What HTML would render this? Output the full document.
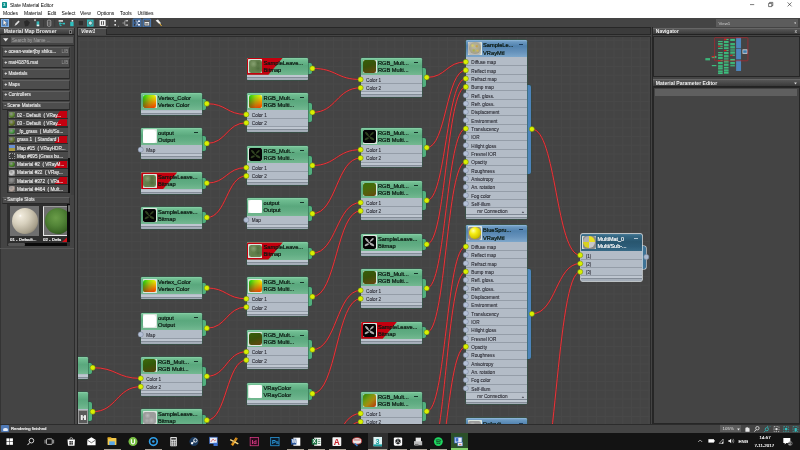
<!DOCTYPE html><html><head><meta charset="utf-8"><title>Slate Material Editor</title><style>
*{box-sizing:border-box;margin:0;padding:0}
html,body{width:800px;height:450px;overflow:hidden;background:#444;font-family:"Liberation Sans",sans-serif;}
#r{position:relative;width:800px;height:450px;overflow:hidden;background:#444;will-change:transform}
.a{position:absolute}
.t{position:absolute;white-space:pre;line-height:1;font-size:5.2px;color:#111}
.w{color:#e6e6e6}
.nd{position:absolute;width:61.5px;border-radius:1.5px;background:#b3bcc7;box-shadow:0 0 0 .5px #2f5a48}
.hd{position:absolute;left:0;top:0;width:100%;height:16.5px;border-radius:1.5px 1.5px 0 0;background:linear-gradient(#8ad2a8 0,#70be92 10%,#5aa87d 45%,#62ad84 70%,#74b991 100%);overflow:hidden}
.hdb{background:linear-gradient(#94bbdc 0,#6c9ac2 10%,#5182ae 35%,#6692bb 70%,#7da7cb 100%)}
.hdm{background:linear-gradient(#4a7c98 0,#356884 12%,#28566f 45%,#2c5c78 75%,#376a86 100%)}
.th{position:absolute;left:1.6px;top:1.7px;width:13.9px;height:13.7px;border-radius:.6px;background:#dce6df}.ti{position:absolute;left:.55px;top:.55px;right:.55px;bottom:.55px;border-radius:2.3px;overflow:hidden}
.nt{position:absolute;left:16.8px;white-space:nowrap;line-height:1;font-size:5.7px;color:#0c1a12;-webkit-text-stroke:.24px #0c1a12}
.row{position:absolute;left:0;width:100%;height:8.34px;border-bottom:.55px solid #949da8}
.rl{position:absolute;left:5px;top:1.6px;white-space:nowrap;line-height:1;font-size:4.65px;color:#26262e;-webkit-text-stroke:.08px #26262e}
.ft{position:absolute;left:0;bottom:0;width:100%;height:5px;background:linear-gradient(#bec6d0 0,#bec6d0 2.1px,#848d98 2.1px,#848d98 2.8px,#a8b1bc 2.8px,#a2abb6 100%);border-radius:0 0 1.5px 1.5px}
.nub{position:absolute;width:4.6px;border-radius:0 2px 2px 0;background:#4aa07a}
.mn{position:absolute;right:3.8px;top:4.3px;width:4.2px;height:.65px;background:#16352a}
.tri{position:absolute;left:0;top:0;width:36px;height:17.05px;background:#c4000f;clip-path:polygon(0 0,100% 0,60% 100%,0 100%)}
.li{position:absolute;left:1.7px;width:68.8px;height:10px;background:#4d4d4d;border-top:.5px solid #606060;border-bottom:.8px solid #282828;border-left:.4px solid #3a3a3a;border-right:.5px solid #303030}
.sm{position:absolute;left:7.5px;width:60px;height:8.2px;border-bottom:.6px solid #2a2a2a;overflow:hidden;background:#4a4a4a}
.hdr{background:linear-gradient(#565656,#3a3a3a);border-top:.5px solid #666;border-bottom:.6px solid #222}
</style></head><body><div id="r">
<div class="a" style="left:0px;top:0px;width:800px;height:17.9px;background:#fff;"></div>
<div class="a" style="left:1.5px;top:1.5px;width:5px;height:6px;background:#0f8f8a;border-radius:.8px"></div>
<div class="t" style="left:3px;top:3.10px;font-size:4.4px;color:#d8ffff;font-weight:bold;">3</div>
<div class="t" style="left:10px;top:3.64px;font-size:4.82px;color:#000;">Slate Material Editor</div>
<div class="t" style="left:3px;top:11.20px;font-size:5.0px;color:#000;">Modes</div>
<div class="t" style="left:24px;top:11.20px;font-size:5.0px;color:#000;">Material</div>
<div class="t" style="left:47.6px;top:11.20px;font-size:5.0px;color:#000;">Edit</div>
<div class="t" style="left:61.6px;top:11.20px;font-size:5.0px;color:#000;">Select</div>
<div class="t" style="left:80px;top:11.20px;font-size:5.0px;color:#000;">View</div>
<div class="t" style="left:97px;top:11.20px;font-size:5.0px;color:#000;">Options</div>
<div class="t" style="left:120px;top:11.20px;font-size:5.0px;color:#000;">Tools</div>
<div class="t" style="left:137.5px;top:11.20px;font-size:5.0px;color:#000;">Utilities</div>
<svg class="a" style="left:740px;top:0;width:60px;height:10px" viewBox="0 0 60 10"><g stroke="#222" stroke-width=".6" fill="none"><path d="M10 4.6h4.2"/><path d="M28.6 3.4h3.2v3.2h-3.2z"/><path d="M29.6 3.4v-1h3.2v3.2h-1"/><path d="M47.6 2.4l4 4M51.6 2.4l-4 4"/></g></svg>
<div class="a" style="left:0px;top:17.9px;width:800px;height:9.7px;background:#444;"></div>
<div class="a" style="left:0.5px;top:18.6px;width:8.6px;height:8.6px;background:#4f86c6;border:.5px solid #7fb0e6"></div>
<svg class="a" style="left:0;top:18px;width:170px;height:10px" viewBox="0 0 170 10"><path d="M3.2 1.6v5.6l1.4-1.2 1 2 .9-.4-1-2h1.8z" fill="#f4f4f4" stroke="#222" stroke-width=".3"/><rect x="10.8" y="1.4" width=".5" height="7.4" fill="#333"/><path d="M14.5 8l1-2.4 3-3 1.2 1.2-3 3z" fill="#ddd"/><path d="M24 3.5l3-1.5 3 2.5-2 3.5-3 .5z" fill="#2a2a2a"/><path d="M34 2.2h2M35 1.2v2" stroke="#eee" stroke-width=".6"/><rect x="36.6" y="3.4" width="2.6" height="4.8" fill="#35b8b8"/><rect x="36.8" y="6.6" width="2.4" height="1.6" fill="#eee"/><rect x="43.4" y="1.4" width=".5" height="7.4" fill="#333"/><rect x="47.4" y="2.2" width="3.4" height="6" rx="1" fill="none" stroke="#bbb" stroke-width=".7"/><path d="M49.1 3.4v3.6" stroke="#bbb" stroke-width=".5"/><rect x="54.6" y="1.4" width=".5" height="7.4" fill="#333"/><rect x="58.6" y="2.2" width="4.4" height="1.4" fill="#eee"/><path d="M59 5.6h3.4M60 4v3.6l1.6 0" stroke="#30c0c0" stroke-width=".9" fill="none"/><rect x="62.6" y="4.8" width="2.4" height="1.6" fill="#30c0c0"/><rect x="70.2" y="3.8" width="3.4" height="4.4" fill="#30c0c0"/><rect x="71.6" y="2" width="1.6" height="1.6" fill="#eee"/><rect x="78.2" y="2.4" width="5.4" height="5.4" fill="#2c2c2c" stroke="#555" stroke-width=".5"/><rect x="87" y="1.6" width="6.6" height="7" fill="#30b8b8"/><circle cx="90.3" cy="5.1" r="2" fill="#bfe8e8" stroke="#333" stroke-width=".5"/><rect x="95.6" y="1.4" width=".5" height="7.4" fill="#333"/><rect x="99.6" y="2" width="6" height="6" rx=".6" fill="#f2f2f2"/><rect x="101.2" y="3.2" width="2.8" height="3.6" fill="#333"/><rect x="102" y="3.2" width="1.2" height="3.6" fill="#eee"/><path d="M106.2 8.8l1.2-1.2v1.2z" fill="#ddd"/><rect x="109.6" y="1.4" width=".5" height="7.4" fill="#333"/><rect x="114.4" y="2" width="1.6" height="1.6" fill="#e8e8e8"/><rect x="114.4" y="6" width="1.6" height="1.6" fill="#e8e8e8"/><path d="M118 8.6l1-1v1z" fill="#ddd"/><path d="M122.4 5h2.4M124.8 2.8v4.4M124.8 2.8h2M124.8 7.2h2" stroke="#ccc" stroke-width=".6" fill="none"/><rect x="126.4" y="2" width="1.4" height="1.4" fill="#ddd"/><rect x="126.4" y="6.4" width="1.4" height="1.4" fill="#ddd"/><rect x="130.2" y="1.4" width=".5" height="7.4" fill="#333"/><rect x="133" y="1" width="8" height="8.2" rx=".6" fill="#35557f" stroke="#5a93d6" stroke-width=".7"/><rect x="143" y="1" width="7.6" height="8.2" rx=".6" fill="#35557f" stroke="#5a93d6" stroke-width=".7"/><path d="M134.4 3h2.2M134.4 7h2.2M137 3v4M137 5h1.6" stroke="#e8f0ff" stroke-width=".6" fill="none"/><rect x="138" y="2.4" width="2" height="1.6" fill="#e8f0ff"/><rect x="138" y="6" width="2" height="1.6" fill="#e8f0ff"/><rect x="134" y="2.2" width="1.4" height="1.4" fill="#222"/><rect x="134" y="6.2" width="1.4" height="1.4" fill="#222"/><rect x="144.2" y="2.6" width="5.2" height="5.2" fill="#e8e8e8" stroke="#333" stroke-width=".4"/><rect x="144.2" y="2.6" width="5.2" height="1.4" fill="#555"/><rect x="145.2" y="5" width="3.2" height="1.8" fill="#888"/><rect x="151.8" y="1.4" width=".5" height="7.4" fill="#333"/><path d="M155.6 2.6l2.4-1 3 3.6-1.4 1z" fill="#f0f0f0"/><path d="M159.6 5.4l2 2.6" stroke="#e8b030" stroke-width="1"/></svg>
<div class="a" style="left:0px;top:27.6px;width:73.6px;height:396px;background:#444;"></div>
<div class="a" style="left:0px;top:27.6px;width:0.9px;height:396px;background:#343434;"></div>
<div class="a" style="left:70.8px;top:45px;width:2.8px;height:150px;background:#3e3e3e;"></div>
<div class="a" style="left:73.6px;top:27.6px;width:1.6px;height:396px;background:#2c2c2c;"></div>
<div class="a" style="left:75.2px;top:27.6px;width:1.4px;height:396px;background:#4c4c4c;"></div>
<div class="a" style="left:76.6px;top:27.6px;width:1.0px;height:396px;background:#262626;"></div>
<div class="a hdr" style="left:0;top:27.8px;width:73.6px;height:7.6px"></div>
<div class="t" style="left:3.8px;top:29.13px;font-size:5.1px;color:#ececec;font-weight:bold;">Material Map Browser</div>
<div class="a" style="left:68.6px;top:29.6px;width:3px;height:4px;background:#1c1c1c;border:.5px solid #777"></div>
<svg class="a" style="left:2px;top:37px;width:8px;height:6px" viewBox="0 0 8 6"><path d="M1 1.2h5.4l-2.7 3.4z" fill="#e8e8e8"/></svg>
<div class="a" style="left:11px;top:36.6px;width:62px;height:6.6px;background:#5e5e5e;"></div>
<div class="t" style="left:12px;top:38.53px;font-size:4.5px;color:#a8a8a8;">Search by Name ...</div>
<div class="a" style="left:0px;top:44.6px;width:73.6px;height:0.6px;background:#2a2a2a;"></div>
<div class="li" style="top:46.9px;height:10px"></div>
<div class="t" style="left:4.4px;top:50.08px;font-size:4.65px;color:#e4e4e4;-webkit-text-stroke:.15px #e4e4e4">+ ocean-water[by shiku...</div>
<div class="t" style="left:61.6px;top:50.03px;font-size:4.5px;color:#9a9a9a;">LIB</div>
<div class="li" style="top:58px;height:10px"></div>
<div class="t" style="left:4.4px;top:60.88px;font-size:4.65px;color:#e4e4e4;-webkit-text-stroke:.15px #e4e4e4">+ mat41876.mat</div>
<div class="t" style="left:61.6px;top:60.83px;font-size:4.5px;color:#9a9a9a;">LIB</div>
<div class="li" style="top:69px;height:10px"></div>
<div class="t" style="left:4.4px;top:71.78px;font-size:4.65px;color:#e4e4e4;-webkit-text-stroke:.15px #e4e4e4">+ Materials</div>
<div class="li" style="top:80px;height:10px"></div>
<div class="t" style="left:4.4px;top:82.68px;font-size:4.65px;color:#e4e4e4;-webkit-text-stroke:.15px #e4e4e4">+ Maps</div>
<div class="li" style="top:91px;height:10px"></div>
<div class="t" style="left:4.4px;top:93.48px;font-size:4.65px;color:#e4e4e4;-webkit-text-stroke:.15px #e4e4e4">+ Controllers</div>
<div class="li" style="top:101.6px;height:8px"></div>
<div class="t" style="left:4.4px;top:103.78px;font-size:4.65px;color:#e4e4e4;-webkit-text-stroke:.15px #e4e4e4">- Scene Materials</div>
<div class="a" style="left:7px;top:109.8px;width:63.4px;height:83.2px;background:#2a2a2a;"></div>
<div class="sm" style="top:111.0px">
<div class="a" style="right:.4px;top:0;width:13.4px;height:8.2px;background:#c4000f;clip-path:polygon(47% 0,100% 0,100% 100%,0 100%)"></div>
<div class="a" style="left:1.2px;top:.8px;width:6.4px;height:6.4px;background:#777"></div><div class="a" style="left:1.6px;top:1.2px;width:5.6px;height:5.6px;border-radius:50%;background:radial-gradient(circle at 38% 32%,#fff3 0,#5f8a34 45%,#1a1a1a 110%)"></div>
<div class="t" style="left:9.4px;top:2.58px;font-size:4.65px;color:#e8e8e8;-webkit-text-stroke:.14px #e8e8e8">02 - Default  ( VRay...</div></div>
<div class="sm" style="top:119.25px">
<div class="a" style="right:.4px;top:0;width:13.4px;height:8.2px;background:#c4000f;clip-path:polygon(47% 0,100% 0,100% 100%,0 100%)"></div>
<div class="a" style="left:1.2px;top:.8px;width:6.4px;height:6.4px;background:#777"></div><div class="a" style="left:1.6px;top:1.2px;width:5.6px;height:5.6px;border-radius:50%;background:radial-gradient(circle at 38% 32%,#fff3 0,#66782a 45%,#1a1a1a 110%)"></div>
<div class="t" style="left:9.4px;top:2.58px;font-size:4.65px;color:#e8e8e8;-webkit-text-stroke:.14px #e8e8e8">03 - Default  ( VRay...</div></div>
<div class="sm" style="top:127.5px">
<div class="a" style="left:1.2px;top:.8px;width:6.4px;height:6.4px;background:#777"></div><div class="a" style="left:1.6px;top:1.2px;width:5.6px;height:5.6px;border-radius:50%;background:radial-gradient(circle at 38% 32%,#fff3 0,#4a9a44 45%,#1a1a1a 110%)"></div>
<div class="t" style="left:9.4px;top:2.58px;font-size:4.65px;color:#e8e8e8;-webkit-text-stroke:.14px #e8e8e8">_fp_grass  ( Multi/Su...</div></div>
<div class="sm" style="top:135.75px">
<div class="a" style="right:.4px;top:0;width:13.4px;height:8.2px;background:#c4000f;clip-path:polygon(47% 0,100% 0,100% 100%,0 100%)"></div>
<div class="a" style="left:1.2px;top:.8px;width:6.4px;height:6.4px;background:#777"></div><div class="a" style="left:1.6px;top:1.2px;width:5.6px;height:5.6px;border-radius:50%;background:radial-gradient(circle at 38% 32%,#fff3 0,#62782e 45%,#1a1a1a 110%)"></div>
<div class="t" style="left:9.4px;top:2.58px;font-size:4.65px;color:#e8e8e8;-webkit-text-stroke:.14px #e8e8e8">grass 1  ( Standard )</div></div>
<div class="sm" style="top:144.0px">
<div class="a" style="left:1.4px;top:1px;width:6px;height:6px;background:linear-gradient(#6a8fd0 50%,#a89a40 50%)"></div>
<div class="t" style="left:9.4px;top:2.58px;font-size:4.65px;color:#e8e8e8;-webkit-text-stroke:.14px #e8e8e8">Map #15  ( VRayHDR...</div></div>
<div class="sm" style="top:152.25px">
<div class="a" style="left:1.4px;top:1px;width:6px;height:6px;background:#3c3c3c;border:.5px dotted #999"></div>
<div class="t" style="left:9.4px;top:2.58px;font-size:4.65px;color:#e8e8e8;-webkit-text-stroke:.14px #e8e8e8">Map #695 (Grass bu...</div></div>
<div class="sm" style="top:160.5px">
<div class="a" style="right:.4px;top:0;width:13.4px;height:8.2px;background:#c4000f;clip-path:polygon(47% 0,100% 0,100% 100%,0 100%)"></div>
<div class="a" style="left:1.2px;top:.8px;width:6.4px;height:6.4px;background:#777"></div><div class="a" style="left:1.6px;top:1.2px;width:5.6px;height:5.6px;border-radius:50%;background:radial-gradient(circle at 38% 32%,#fff3 0,#4c8a2a 45%,#1a1a1a 110%)"></div>
<div class="t" style="left:9.4px;top:2.58px;font-size:4.65px;color:#e8e8e8;-webkit-text-stroke:.14px #e8e8e8">Material #2  ( VRayM...</div></div>
<div class="sm" style="top:168.75px">
<div class="a" style="left:1.2px;top:.8px;width:6.4px;height:6.4px;background:#777"></div><div class="a" style="left:1.6px;top:1.2px;width:5.6px;height:5.6px;border-radius:50%;background:radial-gradient(circle at 38% 32%,#fff3 0,#cfcfcf 45%,#1a1a1a 110%)"></div>
<div class="t" style="left:9.4px;top:2.58px;font-size:4.65px;color:#e8e8e8;-webkit-text-stroke:.14px #e8e8e8">Material #22  ( VRay...</div></div>
<div class="sm" style="top:177.0px">
<div class="a" style="right:.4px;top:0;width:13.4px;height:8.2px;background:#c4000f;clip-path:polygon(47% 0,100% 0,100% 100%,0 100%)"></div>
<div class="a" style="left:1.2px;top:.8px;width:6.4px;height:6.4px;background:#777"></div><div class="a" style="left:1.6px;top:1.2px;width:5.6px;height:5.6px;border-radius:50%;background:radial-gradient(circle at 38% 32%,#fff3 0,#7a7a7a 45%,#1a1a1a 110%)"></div>
<div class="t" style="left:9.4px;top:2.58px;font-size:4.65px;color:#e8e8e8;-webkit-text-stroke:.14px #e8e8e8">Material #372  ( VRa...</div></div>
<div class="sm" style="top:185.25px">
<div class="a" style="left:1.2px;top:.8px;width:6.4px;height:6.4px;background:#777"></div><div class="a" style="left:1.6px;top:1.2px;width:5.6px;height:5.6px;border-radius:50%;background:radial-gradient(circle at 38% 32%,#fff3 0,#b8a8a0 45%,#1a1a1a 110%)"></div>
<div class="t" style="left:9.4px;top:2.58px;font-size:4.65px;color:#e8e8e8;-webkit-text-stroke:.14px #e8e8e8">Material #464  ( Mult...</div></div>
<div class="a" style="left:67.5px;top:109.8px;width:2.9px;height:83.2px;background:#555;"></div>
<div class="a" style="left:67.5px;top:158px;width:2.9px;height:35px;background:#0c0c0c;"></div>
<div class="li" style="top:196.6px;height:7px"></div>
<div class="t" style="left:4.4px;top:198.28px;font-size:4.65px;color:#e4e4e4;-webkit-text-stroke:.15px #e4e4e4">- Sample Slots</div>
<div class="a" style="left:7px;top:204.4px;width:63.4px;height:42px;background:#2e2e2e;"></div>
<div class="a" style="left:10px;top:206px;width:29.4px;height:30px;background:#6f6f6f;"></div>
<div class="a" style="left:11.6px;top:207.6px;width:26px;height:26px;border-radius:50%;background:radial-gradient(circle at 32% 30%,#fff 0,#efe9da 6%,#d6cfbc 35%,#a8a08c 70%,#5e584c 100%)"></div>
<div class="a" style="left:43px;top:206px;width:24.4px;height:30px;background:#6f6f6f;border-left:.7px solid #e8e8e8;border-bottom:.7px solid #e8e8e8;border-top:.4px solid #9a9a9a"></div>
<div class="a" style="left:44.6px;top:207.6px;width:22.8px;height:26px;overflow:hidden"><div class="a" style="left:0;top:0;width:26px;height:26px;border-radius:50%;background:radial-gradient(circle at 42% 38%,#6a9c48 0,#538538 35%,#3c6826 65%,#274a18 88%,#16300c 100%)"></div></div>
<div class="t" style="left:10px;top:238.00px;font-size:4.4px;color:#ececec;-webkit-text-stroke:.22px #ececec">01 - Default...</div>
<div class="t" style="left:43px;top:238.00px;font-size:4.4px;color:#ececec;-webkit-text-stroke:.22px #ececec">02 - Defa</div>
<div class="a" style="left:62px;top:237px;width:5.4px;height:5px;background:#d01018;clip-path:polygon(100% 0,100% 100%,0 100%)"></div>
<div class="a" style="left:67.4px;top:204.4px;width:3px;height:38px;background:#0a0a0a;"></div>
<div class="a" style="left:67.6px;top:204.6px;width:2.6px;height:7px;background:#6a6a6a;border-radius:1px"></div>
<div class="a" style="left:8px;top:242.6px;width:59.4px;height:3.4px;background:#0a0a0a;"></div>
<div class="a" style="left:8.4px;top:242.8px;width:17px;height:3px;background:#555;border-radius:1px"></div>
<div class="a" style="left:0px;top:247.6px;width:73.6px;height:0.7px;background:#2a2a2a;"></div>
<div class="a" style="left:0px;top:248.3px;width:73.6px;height:0.5px;background:#555;"></div>
<div class="a" style="left:77.2px;top:27.3px;width:573.8px;height:8.2px;background:#3b3b3b;border:.8px solid #272727"></div>
<div class="a" style="left:77.8px;top:28px;width:28.8px;height:7px;background:#4a4a4a;border-top:.5px solid #6e6e6e;border-left:.5px solid #5e5e5e;border-right:.6px solid #2a2a2a"></div>
<div class="t" style="left:81px;top:29.33px;font-size:5.1px;color:#f0f0f0;font-weight:bold;font-style:italic">View1</div>
<div class="a" style="left:77.2px;top:35.5px;width:573.8px;height:1.4px;background:#2c2c2c;"></div>
<div class="a" style="left:76.8px;top:36.8px;width:574.2px;height:387.2px;background:#2a2a2a;"></div>
<div class="a" id="cv" style="left:77.6px;top:37.4px;width:572.8px;height:386.2px;overflow:hidden;background-color:#444;background-image:linear-gradient(90deg,#484848 .8px,transparent .8px),linear-gradient(#484848 .8px,transparent .8px);background-size:8.78px 8.76px;background-position:.8px 2.85px">
<div class="nub" style="left:10.10px;top:325.12px;height:11.05px;background:#52b07e;box-shadow:0 0 0 .4px #2a4a40"></div>
<div class="nd" style="left:-50.50px;top:319.60px;width:60.9px;height:22.10px">
<div class="hd" style="height:17.05px">
</div>
<div class="th"><div class="ti" style="background:radial-gradient(circle at 35% 30%,#86a070 0,transparent 30%),radial-gradient(circle at 70% 65%,#4e6c3c 0,transparent 35%),radial-gradient(circle at 30% 75%,#5e7e48 0,transparent 30%),radial-gradient(circle at 70% 25%,#52703e 0,transparent 28%),#68845200;background-color:#688452">
</div></div>
<div class="nt" style="top:2.94px;color:#0c1a12;-webkit-text-stroke-color:#0c1a12;font-size:5.7px"></div><div class="nt" style="top:9.94px;color:#0c1a12;-webkit-text-stroke-color:#0c1a12;font-size:5.7px"></div>
<div class="ft" style="height:4.4px"></div>
</div>
<div class="nub" style="left:10.10px;top:364.58px;height:19.36px;background:#52b07e;box-shadow:0 0 0 .4px #2a4a40"></div>
<div class="nd" style="left:-50.50px;top:354.90px;width:60.9px;height:38.73px">
<div class="hd" style="height:17.05px">
</div>
<div class="th"><div class="ti" style="background:radial-gradient(circle at 35% 30%,#86a070 0,transparent 30%),radial-gradient(circle at 70% 65%,#4e6c3c 0,transparent 35%),radial-gradient(circle at 30% 75%,#5e7e48 0,transparent 30%),radial-gradient(circle at 70% 25%,#52703e 0,transparent 28%),#68845200;background-color:#688452">
</div></div>
<div class="nt" style="top:2.94px;color:#0c1a12;-webkit-text-stroke-color:#0c1a12;font-size:5.7px"></div><div class="nt" style="top:9.94px;color:#0c1a12;-webkit-text-stroke-color:#0c1a12;font-size:5.7px"></div>
<div class="row" style="top:17.70px"><div class="rl" style="top:3.25px">Color 1</div></div>
<div class="row" style="top:26.04px"><div class="rl" style="top:3.25px">Color 2</div></div>
<div class="ft" style="height:4.35px"></div>
</div>
<div class="nub" style="left:124.20px;top:61.12px;height:11.05px;background:#52b07e;box-shadow:0 0 0 .4px #2a4a40"></div>
<div class="nd" style="left:63.60px;top:55.60px;width:60.9px;height:22.10px">
<div class="hd" style="height:17.05px">
</div>
<div class="th"><div class="ti" style="background:linear-gradient(90deg,#16cc10 0,#8ee010 45%,#f4f000 100%)">
<div class="a" style="left:0;top:0;width:100%;height:100%;background:linear-gradient(90deg,#8a5a0c 0,#d05808 50%,#f63c00 100%);-webkit-mask-image:linear-gradient(180deg,transparent 8%,#000 96%);mask-image:linear-gradient(180deg,transparent 8%,#000 96%)"></div>
</div></div>
<div class="nt" style="top:2.94px;color:#0c1a12;-webkit-text-stroke-color:#0c1a12;font-size:5.7px">Vertex_Color</div><div class="nt" style="top:9.94px;color:#0c1a12;-webkit-text-stroke-color:#0c1a12;font-size:5.7px">Vertex Color</div>
<div class="ft" style="height:4.4px"></div>
</div>
<div class="nub" style="left:124.20px;top:98.20px;height:15.60px;background:#52b07e;box-shadow:0 0 0 .4px #2a4a40"></div>
<div class="nd" style="left:63.60px;top:90.40px;width:60.9px;height:31.19px">
<div class="hd" style="height:17.45px">
</div>
<div class="th"><div class="ti" style="background:#fff">
</div></div>
<div class="nt" style="top:2.94px;color:#0c1a12;-webkit-text-stroke-color:#0c1a12;font-size:5.7px">output</div><div class="nt" style="top:9.94px;color:#0c1a12;-webkit-text-stroke-color:#0c1a12;font-size:5.7px">Output</div>
<div class="mn" style="background:#16352a"></div>
<div class="row" style="top:18.10px"><div class="rl" style="top:3.25px">Map</div></div>
<div class="ft" style="height:4.75px"></div>
</div>
<div class="nub" style="left:124.20px;top:140.53px;height:11.05px;background:#52b07e;box-shadow:0 0 0 .4px #2a4a40"></div>
<div class="nd" style="left:63.60px;top:135.00px;width:60.9px;height:22.10px">
<div class="hd" style="height:17.05px">
<div class="tri"></div>
</div>
<div class="th"><div class="ti" style="background:radial-gradient(circle at 35% 30%,#86a070 0,transparent 30%),radial-gradient(circle at 70% 65%,#4e6c3c 0,transparent 35%),radial-gradient(circle at 30% 75%,#5e7e48 0,transparent 30%),radial-gradient(circle at 70% 25%,#52703e 0,transparent 28%),#68845200;background-color:#688452">
</div></div>
<div class="nt" style="top:2.94px;color:#0c1a12;-webkit-text-stroke-color:#0c1a12;font-size:5.7px">SampleLeave...</div><div class="nt" style="top:9.94px;color:#0c1a12;-webkit-text-stroke-color:#0c1a12;font-size:5.7px">Bitmap</div>
<div class="ft" style="height:4.4px"></div>
</div>
<div class="nub" style="left:124.20px;top:174.93px;height:11.05px;background:#52b07e;box-shadow:0 0 0 .4px #2a4a40"></div>
<div class="nd" style="left:63.60px;top:169.40px;width:60.9px;height:22.10px">
<div class="hd" style="height:17.05px">
</div>
<div class="th"><div class="ti" style="background:radial-gradient(circle at 30% 32%,#3e5a28 0,transparent 20%),radial-gradient(circle at 66% 30%,#34502a 0,transparent 18%),radial-gradient(circle at 34% 68%,#2c4420 0,transparent 20%),radial-gradient(circle at 68% 66%,#4a6a36 0,transparent 18%);background-color:#040404">
<svg class="a" style="left:0;top:0;width:100%;height:100%" viewBox="0 0 13 13"><rect width="13" height="13" fill="#050505"/><g fill="#4f6e34" opacity="0.6"><ellipse cx="4" cy="4.2" rx="2.7" ry="1.1" transform="rotate(48 4 4.2)"/><ellipse cx="9" cy="4" rx="2.5" ry="1" transform="rotate(-42 9 4)"/><ellipse cx="3.8" cy="9" rx="2.4" ry="1" transform="rotate(-28 3.8 9)"/><ellipse cx="9" cy="8.8" rx="2.8" ry="1.2" transform="rotate(30 9 8.8)"/><ellipse cx="6.4" cy="6.6" rx="1.2" ry=".6"/></g></svg>
</div></div>
<div class="nt" style="top:2.94px;color:#0c1a12;-webkit-text-stroke-color:#0c1a12;font-size:5.7px">SampleLeave...</div><div class="nt" style="top:9.94px;color:#0c1a12;-webkit-text-stroke-color:#0c1a12;font-size:5.7px">Bitmap</div>
<div class="ft" style="height:4.4px"></div>
</div>
<div class="nub" style="left:124.20px;top:245.43px;height:11.05px;background:#52b07e;box-shadow:0 0 0 .4px #2a4a40"></div>
<div class="nd" style="left:63.60px;top:239.90px;width:60.9px;height:22.10px">
<div class="hd" style="height:17.05px">
</div>
<div class="th"><div class="ti" style="background:linear-gradient(90deg,#16cc10 0,#8ee010 45%,#f4f000 100%)">
<div class="a" style="left:0;top:0;width:100%;height:100%;background:linear-gradient(90deg,#8a5a0c 0,#d05808 50%,#f63c00 100%);-webkit-mask-image:linear-gradient(180deg,transparent 8%,#000 96%);mask-image:linear-gradient(180deg,transparent 8%,#000 96%)"></div>
</div></div>
<div class="nt" style="top:2.94px;color:#0c1a12;-webkit-text-stroke-color:#0c1a12;font-size:5.7px">Vertex_Color</div><div class="nt" style="top:9.94px;color:#0c1a12;-webkit-text-stroke-color:#0c1a12;font-size:5.7px">Vertex Color</div>
<div class="ft" style="height:4.4px"></div>
</div>
<div class="nub" style="left:124.20px;top:283.00px;height:15.60px;background:#52b07e;box-shadow:0 0 0 .4px #2a4a40"></div>
<div class="nd" style="left:63.60px;top:275.20px;width:60.9px;height:31.19px">
<div class="hd" style="height:17.45px">
</div>
<div class="th"><div class="ti" style="background:#fff">
</div></div>
<div class="nt" style="top:2.94px;color:#0c1a12;-webkit-text-stroke-color:#0c1a12;font-size:5.7px">output</div><div class="nt" style="top:9.94px;color:#0c1a12;-webkit-text-stroke-color:#0c1a12;font-size:5.7px">Output</div>
<div class="mn" style="background:#16352a"></div>
<div class="row" style="top:18.10px"><div class="rl" style="top:3.25px">Map</div></div>
<div class="ft" style="height:4.75px"></div>
</div>
<div class="nub" style="left:124.20px;top:329.18px;height:19.36px;background:#52b07e;box-shadow:0 0 0 .4px #2a4a40"></div>
<div class="nd" style="left:63.60px;top:319.50px;width:60.9px;height:38.73px">
<div class="hd" style="height:17.05px">
</div>
<div class="th"><div class="ti" style="background:linear-gradient(160deg,#3c6a0c 0,#345a0a 45%,#4a4a0c 80%,#5a400c 100%)">
</div></div>
<div class="nt" style="top:2.94px;color:#0c1a12;-webkit-text-stroke-color:#0c1a12;font-size:5.7px">RGB_Mult...</div><div class="nt" style="top:9.94px;color:#0c1a12;-webkit-text-stroke-color:#0c1a12;font-size:5.7px">RGB Multi...</div>
<div class="mn" style="background:#16352a"></div>
<div class="row" style="top:17.70px"><div class="rl" style="top:3.25px">Color 1</div></div>
<div class="row" style="top:26.04px"><div class="rl" style="top:3.25px">Color 2</div></div>
<div class="ft" style="height:4.35px"></div>
</div>
<div class="nub" style="left:124.20px;top:377.62px;height:11.05px;background:#52b07e;box-shadow:0 0 0 .4px #2a4a40"></div>
<div class="nd" style="left:63.60px;top:372.10px;width:60.9px;height:22.10px">
<div class="hd" style="height:17.05px">
</div>
<div class="th"><div class="ti" style="background:radial-gradient(circle at 35% 30%,#bcbcbc 0,transparent 25%),radial-gradient(circle at 65% 70%,#b4b4b4 0,transparent 28%),radial-gradient(circle at 30% 72%,#b0b0b0 0,transparent 20%);background-color:#9c9c9c">
</div></div>
<div class="nt" style="top:2.94px;color:#0c1a12;-webkit-text-stroke-color:#0c1a12;font-size:5.7px">SampleLeave...</div><div class="nt" style="top:9.94px;color:#0c1a12;-webkit-text-stroke-color:#0c1a12;font-size:5.7px">Bitmap</div>
<div class="ft" style="height:4.4px"></div>
</div>
<div class="nub" style="left:229.80px;top:25.92px;height:11.05px;background:#52b07e;box-shadow:0 0 0 .4px #2a4a40"></div>
<div class="nd" style="left:169.20px;top:20.40px;width:60.9px;height:22.10px">
<div class="hd" style="height:17.05px">
<div class="tri"></div>
</div>
<div class="th"><div class="ti" style="background:radial-gradient(circle at 35% 30%,#86a070 0,transparent 30%),radial-gradient(circle at 70% 65%,#4e6c3c 0,transparent 35%),radial-gradient(circle at 30% 75%,#5e7e48 0,transparent 30%),radial-gradient(circle at 70% 25%,#52703e 0,transparent 28%),#68845200;background-color:#688452">
</div></div>
<div class="nt" style="top:2.94px;color:#0c1a12;-webkit-text-stroke-color:#0c1a12;font-size:5.7px">SampleLeave...</div><div class="nt" style="top:9.94px;color:#0c1a12;-webkit-text-stroke-color:#0c1a12;font-size:5.7px">Bitmap</div>
<div class="ft" style="height:4.4px"></div>
</div>
<div class="nub" style="left:229.80px;top:65.28px;height:19.36px;background:#52b07e;box-shadow:0 0 0 .4px #2a4a40"></div>
<div class="nd" style="left:169.20px;top:55.60px;width:60.9px;height:38.73px">
<div class="hd" style="height:17.05px">
</div>
<div class="th"><div class="ti" style="background:linear-gradient(90deg,#16cc10 0,#8ee010 45%,#f4f000 100%)">
<div class="a" style="left:0;top:0;width:100%;height:100%;background:linear-gradient(90deg,#8a5a0c 0,#d05808 50%,#f63c00 100%);-webkit-mask-image:linear-gradient(180deg,transparent 8%,#000 96%);mask-image:linear-gradient(180deg,transparent 8%,#000 96%)"></div>
</div></div>
<div class="nt" style="top:2.94px;color:#0c1a12;-webkit-text-stroke-color:#0c1a12;font-size:5.7px">RGB_Mult...</div><div class="nt" style="top:9.94px;color:#0c1a12;-webkit-text-stroke-color:#0c1a12;font-size:5.7px">RGB Multi...</div>
<div class="mn" style="background:#16352a"></div>
<div class="row" style="top:17.70px"><div class="rl" style="top:3.25px">Color 1</div></div>
<div class="row" style="top:26.04px"><div class="rl" style="top:3.25px">Color 2</div></div>
<div class="ft" style="height:4.35px"></div>
</div>
<div class="nub" style="left:229.80px;top:118.38px;height:19.36px;background:#52b07e;box-shadow:0 0 0 .4px #2a4a40"></div>
<div class="nd" style="left:169.20px;top:108.70px;width:60.9px;height:38.73px">
<div class="hd" style="height:17.05px">
</div>
<div class="th"><div class="ti" style="background:radial-gradient(circle at 30% 32%,#3e5a28 0,transparent 20%),radial-gradient(circle at 66% 30%,#34502a 0,transparent 18%),radial-gradient(circle at 34% 68%,#2c4420 0,transparent 20%),radial-gradient(circle at 68% 66%,#4a6a36 0,transparent 18%);background-color:#040404">
<svg class="a" style="left:0;top:0;width:100%;height:100%" viewBox="0 0 13 13"><rect width="13" height="13" fill="#050505"/><g fill="#4f6e34" opacity="0.6"><ellipse cx="4" cy="4.2" rx="2.7" ry="1.1" transform="rotate(48 4 4.2)"/><ellipse cx="9" cy="4" rx="2.5" ry="1" transform="rotate(-42 9 4)"/><ellipse cx="3.8" cy="9" rx="2.4" ry="1" transform="rotate(-28 3.8 9)"/><ellipse cx="9" cy="8.8" rx="2.8" ry="1.2" transform="rotate(30 9 8.8)"/><ellipse cx="6.4" cy="6.6" rx="1.2" ry=".6"/></g></svg>
</div></div>
<div class="nt" style="top:2.94px;color:#0c1a12;-webkit-text-stroke-color:#0c1a12;font-size:5.7px">RGB_Mult...</div><div class="nt" style="top:9.94px;color:#0c1a12;-webkit-text-stroke-color:#0c1a12;font-size:5.7px">RGB Multi...</div>
<div class="mn" style="background:#16352a"></div>
<div class="row" style="top:17.70px"><div class="rl" style="top:3.25px">Color 1</div></div>
<div class="row" style="top:26.04px"><div class="rl" style="top:3.25px">Color 2</div></div>
<div class="ft" style="height:4.35px"></div>
</div>
<div class="nub" style="left:229.80px;top:168.50px;height:15.60px;background:#52b07e;box-shadow:0 0 0 .4px #2a4a40"></div>
<div class="nd" style="left:169.20px;top:160.70px;width:60.9px;height:31.19px">
<div class="hd" style="height:17.45px">
</div>
<div class="th"><div class="ti" style="background:#fff">
</div></div>
<div class="nt" style="top:2.94px;color:#0c1a12;-webkit-text-stroke-color:#0c1a12;font-size:5.7px">output</div><div class="nt" style="top:9.94px;color:#0c1a12;-webkit-text-stroke-color:#0c1a12;font-size:5.7px">Output</div>
<div class="mn" style="background:#16352a"></div>
<div class="row" style="top:18.10px"><div class="rl" style="top:3.25px">Map</div></div>
<div class="ft" style="height:4.75px"></div>
</div>
<div class="nub" style="left:229.80px;top:210.62px;height:11.05px;background:#52b07e;box-shadow:0 0 0 .4px #2a4a40"></div>
<div class="nd" style="left:169.20px;top:205.10px;width:60.9px;height:22.10px">
<div class="hd" style="height:17.05px">
<div class="tri"></div>
</div>
<div class="th"><div class="ti" style="background:radial-gradient(circle at 35% 30%,#86a070 0,transparent 30%),radial-gradient(circle at 70% 65%,#4e6c3c 0,transparent 35%),radial-gradient(circle at 30% 75%,#5e7e48 0,transparent 30%),radial-gradient(circle at 70% 25%,#52703e 0,transparent 28%),#68845200;background-color:#688452">
</div></div>
<div class="nt" style="top:2.94px;color:#0c1a12;-webkit-text-stroke-color:#0c1a12;font-size:5.7px">SampleLeave...</div><div class="nt" style="top:9.94px;color:#0c1a12;-webkit-text-stroke-color:#0c1a12;font-size:5.7px">Bitmap</div>
<div class="ft" style="height:4.4px"></div>
</div>
<div class="nub" style="left:229.80px;top:249.58px;height:19.36px;background:#52b07e;box-shadow:0 0 0 .4px #2a4a40"></div>
<div class="nd" style="left:169.20px;top:239.90px;width:60.9px;height:38.73px">
<div class="hd" style="height:17.05px">
</div>
<div class="th"><div class="ti" style="background:linear-gradient(90deg,#16cc10 0,#8ee010 45%,#f4f000 100%)">
<div class="a" style="left:0;top:0;width:100%;height:100%;background:linear-gradient(90deg,#8a5a0c 0,#d05808 50%,#f63c00 100%);-webkit-mask-image:linear-gradient(180deg,transparent 8%,#000 96%);mask-image:linear-gradient(180deg,transparent 8%,#000 96%)"></div>
</div></div>
<div class="nt" style="top:2.94px;color:#0c1a12;-webkit-text-stroke-color:#0c1a12;font-size:5.7px">RGB_Mult...</div><div class="nt" style="top:9.94px;color:#0c1a12;-webkit-text-stroke-color:#0c1a12;font-size:5.7px">RGB Multi...</div>
<div class="mn" style="background:#16352a"></div>
<div class="row" style="top:17.70px"><div class="rl" style="top:3.25px">Color 1</div></div>
<div class="row" style="top:26.04px"><div class="rl" style="top:3.25px">Color 2</div></div>
<div class="ft" style="height:4.35px"></div>
</div>
<div class="nub" style="left:229.80px;top:302.58px;height:19.36px;background:#52b07e;box-shadow:0 0 0 .4px #2a4a40"></div>
<div class="nd" style="left:169.20px;top:292.90px;width:60.9px;height:38.73px">
<div class="hd" style="height:17.05px">
</div>
<div class="th"><div class="ti" style="background:linear-gradient(160deg,#35600a 0,#3a520a 45%,#584c0e 80%,#684010 100%)">
</div></div>
<div class="nt" style="top:2.94px;color:#0c1a12;-webkit-text-stroke-color:#0c1a12;font-size:5.7px">RGB_Mult...</div><div class="nt" style="top:9.94px;color:#0c1a12;-webkit-text-stroke-color:#0c1a12;font-size:5.7px">RGB Multi...</div>
<div class="mn" style="background:#16352a"></div>
<div class="row" style="top:17.70px"><div class="rl" style="top:3.25px">Color 1</div></div>
<div class="row" style="top:26.04px"><div class="rl" style="top:3.25px">Color 2</div></div>
<div class="ft" style="height:4.35px"></div>
</div>
<div class="nub" style="left:229.80px;top:351.12px;height:11.05px;background:#52b07e;box-shadow:0 0 0 .4px #2a4a40"></div>
<div class="nd" style="left:169.20px;top:345.60px;width:60.9px;height:22.10px">
<div class="hd" style="height:17.05px">
</div>
<div class="th"><div class="ti" style="background:#fff">
</div></div>
<div class="nt" style="top:2.94px;color:#0c1a12;-webkit-text-stroke-color:#0c1a12;font-size:5.7px">VRayColor</div><div class="nt" style="top:9.94px;color:#0c1a12;-webkit-text-stroke-color:#0c1a12;font-size:5.7px">VRayColor</div>
<div class="ft" style="height:4.4px"></div>
</div>
<div class="nub" style="left:344.10px;top:30.28px;height:19.36px;background:#52b07e;box-shadow:0 0 0 .4px #2a4a40"></div>
<div class="nd" style="left:283.50px;top:20.60px;width:60.9px;height:38.73px">
<div class="hd" style="height:17.05px">
</div>
<div class="th"><div class="ti" style="background:linear-gradient(160deg,#35600a 0,#3a520a 45%,#584c0e 80%,#684010 100%)">
</div></div>
<div class="nt" style="top:2.94px;color:#0c1a12;-webkit-text-stroke-color:#0c1a12;font-size:5.7px">RGB_Mult...</div><div class="nt" style="top:9.94px;color:#0c1a12;-webkit-text-stroke-color:#0c1a12;font-size:5.7px">RGB Multi...</div>
<div class="mn" style="background:#16352a"></div>
<div class="row" style="top:17.70px"><div class="rl" style="top:3.25px">Color 1</div></div>
<div class="row" style="top:26.04px"><div class="rl" style="top:3.25px">Color 2</div></div>
<div class="ft" style="height:4.35px"></div>
</div>
<div class="nub" style="left:344.10px;top:100.48px;height:19.36px;background:#52b07e;box-shadow:0 0 0 .4px #2a4a40"></div>
<div class="nd" style="left:283.50px;top:90.80px;width:60.9px;height:38.73px">
<div class="hd" style="height:17.05px">
</div>
<div class="th"><div class="ti" style="background:radial-gradient(circle at 30% 32%,#3e5a28 0,transparent 20%),radial-gradient(circle at 66% 30%,#34502a 0,transparent 18%),radial-gradient(circle at 34% 68%,#2c4420 0,transparent 20%),radial-gradient(circle at 68% 66%,#4a6a36 0,transparent 18%);background-color:#040404">
<svg class="a" style="left:0;top:0;width:100%;height:100%" viewBox="0 0 13 13"><rect width="13" height="13" fill="#050505"/><g fill="#4f6e34" opacity="0.6"><ellipse cx="4" cy="4.2" rx="2.7" ry="1.1" transform="rotate(48 4 4.2)"/><ellipse cx="9" cy="4" rx="2.5" ry="1" transform="rotate(-42 9 4)"/><ellipse cx="3.8" cy="9" rx="2.4" ry="1" transform="rotate(-28 3.8 9)"/><ellipse cx="9" cy="8.8" rx="2.8" ry="1.2" transform="rotate(30 9 8.8)"/><ellipse cx="6.4" cy="6.6" rx="1.2" ry=".6"/></g></svg>
</div></div>
<div class="nt" style="top:2.94px;color:#0c1a12;-webkit-text-stroke-color:#0c1a12;font-size:5.7px">RGB_Mult...</div><div class="nt" style="top:9.94px;color:#0c1a12;-webkit-text-stroke-color:#0c1a12;font-size:5.7px">RGB Multi...</div>
<div class="mn" style="background:#16352a"></div>
<div class="row" style="top:17.70px"><div class="rl" style="top:3.25px">Color 1</div></div>
<div class="row" style="top:26.04px"><div class="rl" style="top:3.25px">Color 2</div></div>
<div class="ft" style="height:4.35px"></div>
</div>
<div class="nub" style="left:344.10px;top:153.38px;height:19.36px;background:#52b07e;box-shadow:0 0 0 .4px #2a4a40"></div>
<div class="nd" style="left:283.50px;top:143.70px;width:60.9px;height:38.73px">
<div class="hd" style="height:17.05px">
</div>
<div class="th"><div class="ti" style="background:linear-gradient(160deg,#3a7008 0,#4a6a0c 40%,#5a5a0e 75%,#6a3e0c 100%)">
</div></div>
<div class="nt" style="top:2.94px;color:#0c1a12;-webkit-text-stroke-color:#0c1a12;font-size:5.7px">RGB_Mult...</div><div class="nt" style="top:9.94px;color:#0c1a12;-webkit-text-stroke-color:#0c1a12;font-size:5.7px">RGB Multi...</div>
<div class="mn" style="background:#16352a"></div>
<div class="row" style="top:17.70px"><div class="rl" style="top:3.25px">Color 1</div></div>
<div class="row" style="top:26.04px"><div class="rl" style="top:3.25px">Color 2</div></div>
<div class="ft" style="height:4.35px"></div>
</div>
<div class="nub" style="left:344.10px;top:201.82px;height:11.05px;background:#52b07e;box-shadow:0 0 0 .4px #2a4a40"></div>
<div class="nd" style="left:283.50px;top:196.30px;width:60.9px;height:22.10px">
<div class="hd" style="height:17.05px">
</div>
<div class="th"><div class="ti" style="background:radial-gradient(circle at 28% 30%,#e0e0e0 0,transparent 24%),radial-gradient(circle at 72% 32%,#c8c8c8 0,transparent 20%),radial-gradient(circle at 30% 72%,#b8b8b8 0,transparent 24%),radial-gradient(circle at 74% 68%,#f0f0f0 0,transparent 22%);background-color:#060606">
<svg class="a" style="left:0;top:0;width:100%;height:100%" viewBox="0 0 13 13"><rect width="13" height="13" fill="#050505"/><g fill="#c4c4c4" opacity="0.9"><ellipse cx="4" cy="4.2" rx="2.7" ry="1.1" transform="rotate(48 4 4.2)"/><ellipse cx="9" cy="4" rx="2.5" ry="1" transform="rotate(-42 9 4)"/><ellipse cx="3.8" cy="9" rx="2.4" ry="1" transform="rotate(-28 3.8 9)"/><ellipse cx="9" cy="8.8" rx="2.8" ry="1.2" transform="rotate(30 9 8.8)"/><ellipse cx="6.4" cy="6.6" rx="1.2" ry=".6"/></g></svg>
</div></div>
<div class="nt" style="top:2.94px;color:#0c1a12;-webkit-text-stroke-color:#0c1a12;font-size:5.7px">SampleLeave...</div><div class="nt" style="top:9.94px;color:#0c1a12;-webkit-text-stroke-color:#0c1a12;font-size:5.7px">Bitmap</div>
<div class="ft" style="height:4.4px"></div>
</div>
<div class="nub" style="left:344.10px;top:241.18px;height:19.36px;background:#52b07e;box-shadow:0 0 0 .4px #2a4a40"></div>
<div class="nd" style="left:283.50px;top:231.50px;width:60.9px;height:38.73px">
<div class="hd" style="height:17.05px">
</div>
<div class="th"><div class="ti" style="background:linear-gradient(160deg,#35600a 0,#3a520a 45%,#584c0e 80%,#684010 100%)">
</div></div>
<div class="nt" style="top:2.94px;color:#0c1a12;-webkit-text-stroke-color:#0c1a12;font-size:5.7px">RGB_Mult...</div><div class="nt" style="top:9.94px;color:#0c1a12;-webkit-text-stroke-color:#0c1a12;font-size:5.7px">RGB Multi...</div>
<div class="mn" style="background:#16352a"></div>
<div class="row" style="top:17.70px"><div class="rl" style="top:3.25px">Color 1</div></div>
<div class="row" style="top:26.04px"><div class="rl" style="top:3.25px">Color 2</div></div>
<div class="ft" style="height:4.35px"></div>
</div>
<div class="nub" style="left:344.10px;top:289.82px;height:11.05px;background:#52b07e;box-shadow:0 0 0 .4px #2a4a40"></div>
<div class="nd" style="left:283.50px;top:284.30px;width:60.9px;height:22.10px">
<div class="hd" style="height:17.05px">
<div class="tri"></div>
</div>
<div class="th"><div class="ti" style="background:radial-gradient(circle at 28% 30%,#e0e0e0 0,transparent 24%),radial-gradient(circle at 72% 32%,#c8c8c8 0,transparent 20%),radial-gradient(circle at 30% 72%,#b8b8b8 0,transparent 24%),radial-gradient(circle at 74% 68%,#f0f0f0 0,transparent 22%);background-color:#060606">
<svg class="a" style="left:0;top:0;width:100%;height:100%" viewBox="0 0 13 13"><rect width="13" height="13" fill="#050505"/><g fill="#c4c4c4" opacity="0.9"><ellipse cx="4" cy="4.2" rx="2.7" ry="1.1" transform="rotate(48 4 4.2)"/><ellipse cx="9" cy="4" rx="2.5" ry="1" transform="rotate(-42 9 4)"/><ellipse cx="3.8" cy="9" rx="2.4" ry="1" transform="rotate(-28 3.8 9)"/><ellipse cx="9" cy="8.8" rx="2.8" ry="1.2" transform="rotate(30 9 8.8)"/><ellipse cx="6.4" cy="6.6" rx="1.2" ry=".6"/></g></svg>
</div></div>
<div class="nt" style="top:2.94px;color:#0c1a12;-webkit-text-stroke-color:#0c1a12;font-size:5.7px">SampleLeave...</div><div class="nt" style="top:9.94px;color:#0c1a12;-webkit-text-stroke-color:#0c1a12;font-size:5.7px">Bitmap</div>
<div class="ft" style="height:4.4px"></div>
</div>
<div class="nub" style="left:344.10px;top:364.28px;height:19.36px;background:#52b07e;box-shadow:0 0 0 .4px #2a4a40"></div>
<div class="nd" style="left:283.50px;top:354.60px;width:60.9px;height:38.73px">
<div class="hd" style="height:17.05px">
</div>
<div class="th"><div class="ti" style="background:linear-gradient(135deg,#2a8a0c 0,#7a9a10 38%,#a88a10 60%,#b05a10 82%,#c0380e 100%)">
</div></div>
<div class="nt" style="top:2.94px;color:#0c1a12;-webkit-text-stroke-color:#0c1a12;font-size:5.7px">RGB_Mult...</div><div class="nt" style="top:9.94px;color:#0c1a12;-webkit-text-stroke-color:#0c1a12;font-size:5.7px">RGB Multi...</div>
<div class="mn" style="background:#16352a"></div>
<div class="row" style="top:17.70px"><div class="rl" style="top:3.25px">Color 1</div></div>
<div class="row" style="top:26.04px"><div class="rl" style="top:3.25px">Color 2</div></div>
<div class="ft" style="height:4.35px"></div>
</div>
<div class="nub" style="left:449.30px;top:47.35px;height:89.51px;background:#4d84ba;box-shadow:0 0 0 .4px #2a4a40"></div>
<div class="nd" style="left:388.70px;top:2.60px;width:60.9px;height:179.02px">
<div class="hd hdb" style="height:17.20px">
</div>
<div class="th"><div class="ti" style="background:#b9b9b4">
<div class="a" style="left:.3px;top:.2px;width:12px;height:12px;border-radius:50%;background:radial-gradient(circle at 30% 30%,#d8d060 0,transparent 18%),radial-gradient(circle at 65% 35%,#c8a030 0,transparent 16%),radial-gradient(circle at 40% 70%,#a8b040 0,transparent 18%),radial-gradient(circle at 70% 72%,#d0b850 0,transparent 15%),radial-gradient(circle at 45% 40%,#bdb9a0 0,#a39f88 70%,#7a7868 100%)"></div>
</div></div>
<div class="nt" style="top:3.14px;color:#0c1a12;-webkit-text-stroke-color:#0c1a12;font-size:5.7px">SampleLe...</div><div class="nt" style="top:11.14px;color:#0c1a12;-webkit-text-stroke-color:#0c1a12;font-size:5.7px">VRayMtl</div>
<div class="mn" style="background:#1c3c5c"></div>
<div class="row" style="top:18.10px"><div class="rl" style="top:3.25px">Diffuse map</div></div>
<div class="row" style="top:26.44px"><div class="rl" style="top:3.25px">Reflect map</div></div>
<div class="row" style="top:34.78px"><div class="rl" style="top:3.25px">Refract map</div></div>
<div class="row" style="top:43.12px"><div class="rl" style="top:3.25px">Bump map</div></div>
<div class="row" style="top:51.46px"><div class="rl" style="top:3.25px">Refl. gloss.</div></div>
<div class="row" style="top:59.80px"><div class="rl" style="top:3.25px">Refr. gloss.</div></div>
<div class="row" style="top:68.14px"><div class="rl" style="top:3.25px">Displacement</div></div>
<div class="row" style="top:76.48px"><div class="rl" style="top:3.25px">Environment</div></div>
<div class="row" style="top:84.82px"><div class="rl" style="top:3.25px">Translucency</div></div>
<div class="row" style="top:93.16px"><div class="rl" style="top:3.25px">IOR</div></div>
<div class="row" style="top:101.50px"><div class="rl" style="top:3.25px">Hilight gloss</div></div>
<div class="row" style="top:109.84px"><div class="rl" style="top:3.25px">Fresnel IOR</div></div>
<div class="row" style="top:118.18px"><div class="rl" style="top:3.25px">Opacity</div></div>
<div class="row" style="top:126.52px"><div class="rl" style="top:3.25px">Roughness</div></div>
<div class="row" style="top:134.86px"><div class="rl" style="top:3.25px">Anisotropy</div></div>
<div class="row" style="top:143.20px"><div class="rl" style="top:3.25px">An. rotation</div></div>
<div class="row" style="top:151.54px"><div class="rl" style="top:3.25px">Fog color</div></div>
<div class="row" style="top:159.88px"><div class="rl" style="top:3.25px">Self-illum</div></div>
<div class="row" style="top:168.22px;height:7.2px;border-bottom:.6px solid #7f8894;background:#b9c1cb"><div class="rl" style="left:11px;top:2.18px">mr Connection</div><div class="rl" style="left:55.5px;top:1.76px;font-size:4px;color:#556">+</div></div>
<div class="ft" style="height:3.6px"></div>
</div>
<div class="nub" style="left:449.30px;top:232.05px;height:89.51px;background:#4d84ba;box-shadow:0 0 0 .4px #2a4a40"></div>
<div class="nd" style="left:388.70px;top:187.30px;width:60.9px;height:179.02px">
<div class="hd hdb" style="height:17.20px">
</div>
<div class="th"><div class="ti" style="background:#8e8e8e">
<div class="a" style="left:.4px;top:.3px;width:11.8px;height:11.8px;border-radius:50%;background:radial-gradient(circle at 36% 30%,#ffffa8 0,#f6ee14 30%,#d4c400 65%,#7a7000 100%)"></div>
</div></div>
<div class="nt" style="top:3.14px;color:#0c1a12;-webkit-text-stroke-color:#0c1a12;font-size:5.7px">BlueSpru...</div><div class="nt" style="top:11.14px;color:#0c1a12;-webkit-text-stroke-color:#0c1a12;font-size:5.7px">VRayMtl</div>
<div class="mn" style="background:#1c3c5c"></div>
<div class="row" style="top:18.10px"><div class="rl" style="top:3.25px">Diffuse map</div></div>
<div class="row" style="top:26.44px"><div class="rl" style="top:3.25px">Reflect map</div></div>
<div class="row" style="top:34.78px"><div class="rl" style="top:3.25px">Refract map</div></div>
<div class="row" style="top:43.12px"><div class="rl" style="top:3.25px">Bump map</div></div>
<div class="row" style="top:51.46px"><div class="rl" style="top:3.25px">Refl. gloss.</div></div>
<div class="row" style="top:59.80px"><div class="rl" style="top:3.25px">Refr. gloss.</div></div>
<div class="row" style="top:68.14px"><div class="rl" style="top:3.25px">Displacement</div></div>
<div class="row" style="top:76.48px"><div class="rl" style="top:3.25px">Environment</div></div>
<div class="row" style="top:84.82px"><div class="rl" style="top:3.25px">Translucency</div></div>
<div class="row" style="top:93.16px"><div class="rl" style="top:3.25px">IOR</div></div>
<div class="row" style="top:101.50px"><div class="rl" style="top:3.25px">Hilight gloss</div></div>
<div class="row" style="top:109.84px"><div class="rl" style="top:3.25px">Fresnel IOR</div></div>
<div class="row" style="top:118.18px"><div class="rl" style="top:3.25px">Opacity</div></div>
<div class="row" style="top:126.52px"><div class="rl" style="top:3.25px">Roughness</div></div>
<div class="row" style="top:134.86px"><div class="rl" style="top:3.25px">Anisotropy</div></div>
<div class="row" style="top:143.20px"><div class="rl" style="top:3.25px">An. rotation</div></div>
<div class="row" style="top:151.54px"><div class="rl" style="top:3.25px">Fog color</div></div>
<div class="row" style="top:159.88px"><div class="rl" style="top:3.25px">Self-illum</div></div>
<div class="row" style="top:168.22px;height:7.2px;border-bottom:.6px solid #7f8894;background:#b9c1cb"><div class="rl" style="left:11px;top:2.18px">mr Connection</div><div class="rl" style="left:55.5px;top:1.76px;font-size:4px;color:#556">+</div></div>
<div class="ft" style="height:3.6px"></div>
</div>
<div class="nub" style="left:449.30px;top:425.75px;height:89.51px;background:#4d84ba;box-shadow:0 0 0 .4px #2a4a40"></div>
<div class="nd" style="left:388.70px;top:381.00px;width:60.9px;height:179.02px">
<div class="hd hdb" style="height:17.20px">
</div>
<div class="th"><div class="ti" style="background:radial-gradient(circle at 35% 30%,#bcbcbc 0,transparent 25%),radial-gradient(circle at 65% 70%,#b4b4b4 0,transparent 28%),radial-gradient(circle at 30% 72%,#b0b0b0 0,transparent 20%);background-color:#9c9c9c">
</div></div>
<div class="nt" style="top:3.14px;color:#0c1a12;-webkit-text-stroke-color:#0c1a12;font-size:5.7px">Default</div><div class="nt" style="top:11.14px;color:#0c1a12;-webkit-text-stroke-color:#0c1a12;font-size:5.7px">VRayMtl</div>
<div class="mn" style="background:#1c3c5c"></div>
<div class="row" style="top:18.10px"><div class="rl" style="top:3.25px">Diffuse map</div></div>
<div class="row" style="top:26.44px"><div class="rl" style="top:3.25px">Reflect map</div></div>
<div class="row" style="top:34.78px"><div class="rl" style="top:3.25px">Refract map</div></div>
<div class="row" style="top:43.12px"><div class="rl" style="top:3.25px">Bump map</div></div>
<div class="row" style="top:51.46px"><div class="rl" style="top:3.25px">Refl. gloss.</div></div>
<div class="row" style="top:59.80px"><div class="rl" style="top:3.25px">Refr. gloss.</div></div>
<div class="row" style="top:68.14px"><div class="rl" style="top:3.25px">Displacement</div></div>
<div class="row" style="top:76.48px"><div class="rl" style="top:3.25px">Environment</div></div>
<div class="row" style="top:84.82px"><div class="rl" style="top:3.25px">Translucency</div></div>
<div class="row" style="top:93.16px"><div class="rl" style="top:3.25px">IOR</div></div>
<div class="row" style="top:101.50px"><div class="rl" style="top:3.25px">Hilight gloss</div></div>
<div class="row" style="top:109.84px"><div class="rl" style="top:3.25px">Fresnel IOR</div></div>
<div class="row" style="top:118.18px"><div class="rl" style="top:3.25px">Opacity</div></div>
<div class="row" style="top:126.52px"><div class="rl" style="top:3.25px">Roughness</div></div>
<div class="row" style="top:134.86px"><div class="rl" style="top:3.25px">Anisotropy</div></div>
<div class="row" style="top:143.20px"><div class="rl" style="top:3.25px">An. rotation</div></div>
<div class="row" style="top:151.54px"><div class="rl" style="top:3.25px">Fog color</div></div>
<div class="row" style="top:159.88px"><div class="rl" style="top:3.25px">Self-illum</div></div>
<div class="row" style="top:168.22px;height:7.2px;border-bottom:.6px solid #7f8894;background:#b9c1cb"><div class="rl" style="left:11px;top:2.18px">mr Connection</div><div class="rl" style="left:55.5px;top:1.76px;font-size:4px;color:#556">+</div></div>
<div class="ft" style="height:3.6px"></div>
</div>
<div class="nub" style="left:563.70px;top:208.20px;height:23.41px;background:#3f7396;box-shadow:0 0 0 .6px #dfe7ee"></div>
<div class="nd" style="left:503.10px;top:196.50px;width:60.9px;height:46.82px;box-shadow:0 0 0 .7px #e4ebf0">
<div class="hd hdm" style="height:16.85px">
</div>
<div class="th"><div class="ti" style="background:#8a8a8a">
<div class="a" style="left:.4px;top:.3px;width:11.8px;height:11.8px;border-radius:50%;background:conic-gradient(#e8e020 0 25%,#c8c8c8 25% 50%,#d8d020 50% 75%,#b0b0b0 75%)"></div>
</div></div>
<div class="nt" style="top:2.95px;color:#f2f2f2;-webkit-text-stroke-color:#f2f2f2;font-size:5.45px">MultiMat_0</div><div class="nt" style="top:9.95px;color:#f2f2f2;-webkit-text-stroke-color:#f2f2f2;font-size:5.45px">Multi/Sub-...</div>
<div class="mn" style="background:#b4c6d4;height:.5px"></div>
<div class="row" style="top:17.50px"><div class="rl" style="top:3.25px">(1)</div></div>
<div class="row" style="top:25.84px"><div class="rl" style="top:3.25px">(2)</div></div>
<div class="row" style="top:34.18px"><div class="rl" style="top:3.25px">(3)</div></div>
<div class="ft" style="height:4.3px"></div>
</div>
<svg class="a" style="left:0;top:0;width:572.8px;height:386.2px" viewBox="0 0 572.8 386.2">
<path d="M128.8 66.7C148.6 66.7 148.6 77.5 168.3 77.5M128.8 106.4C148.6 106.4 148.6 85.8 168.3 85.8M128.8 146.1C148.6 146.1 148.6 130.6 168.3 130.6M128.8 180.5C148.6 180.5 148.6 138.9 168.3 138.9M128.8 251.0C148.6 251.0 148.6 261.8 168.3 261.8M128.8 291.2C148.6 291.2 148.6 270.1 168.3 270.1M128.8 339.3C148.6 339.3 148.6 314.8 168.3 314.8M128.8 383.2C148.6 383.2 148.6 323.1 168.3 323.1M14.7 330.7C38.7 330.7 38.7 341.4 62.7 341.4M14.7 374.7C38.7 374.7 38.7 349.7 62.7 349.7M234.4 31.4C258.5 31.4 258.5 42.5 282.6 42.5M234.4 75.4C258.5 75.4 258.5 50.8 282.6 50.8M234.4 128.5C258.5 128.5 258.5 112.7 282.6 112.7M234.4 176.7C258.5 176.7 258.5 121.0 282.6 121.0M234.4 216.2C258.5 216.2 258.5 165.6 282.6 165.6M234.4 259.7C258.5 259.7 258.5 173.9 282.6 173.9M234.4 312.7C258.5 312.7 258.5 253.4 282.6 253.4M234.4 356.7C258.5 356.7 258.5 261.7 282.6 261.7M348.7 40.4C368.2 40.4 368.2 24.9 387.8 24.9M348.7 110.6C368.2 110.6 368.2 33.2 387.8 33.2M348.7 163.5C368.2 163.5 368.2 41.6 387.8 41.6M348.7 207.3C368.2 207.3 368.2 49.9 387.8 49.9M348.7 251.3C368.2 251.3 368.2 91.6 387.8 91.6M348.7 295.4C368.2 295.4 368.2 124.9 387.8 124.9M348.7 374.4C368.2 374.4 368.2 209.6 387.8 209.6M453.9 92.1C478.1 92.1 478.1 218.2 502.2 218.2M453.9 276.8C478.1 276.8 478.1 226.5 502.2 226.5M453.9 470.5C478.1 470.5 478.1 234.8 502.2 234.8M348.7 424.6C368.2 424.6 368.2 234.6 387.8 234.6M348.7 464.6C368.2 464.6 368.2 309.7 387.8 309.7M234.4 426.6C258.5 426.6 258.5 376.5 282.6 376.5M234.4 454.6C258.5 454.6 258.5 384.8 282.6 384.8" fill="none" stroke="#7a1c1c" stroke-width="1.7" opacity=".45"/>
<path d="M128.8 66.7C148.6 66.7 148.6 77.5 168.3 77.5M128.8 106.4C148.6 106.4 148.6 85.8 168.3 85.8M128.8 146.1C148.6 146.1 148.6 130.6 168.3 130.6M128.8 180.5C148.6 180.5 148.6 138.9 168.3 138.9M128.8 251.0C148.6 251.0 148.6 261.8 168.3 261.8M128.8 291.2C148.6 291.2 148.6 270.1 168.3 270.1M128.8 339.3C148.6 339.3 148.6 314.8 168.3 314.8M128.8 383.2C148.6 383.2 148.6 323.1 168.3 323.1M14.7 330.7C38.7 330.7 38.7 341.4 62.7 341.4M14.7 374.7C38.7 374.7 38.7 349.7 62.7 349.7M234.4 31.4C258.5 31.4 258.5 42.5 282.6 42.5M234.4 75.4C258.5 75.4 258.5 50.8 282.6 50.8M234.4 128.5C258.5 128.5 258.5 112.7 282.6 112.7M234.4 176.7C258.5 176.7 258.5 121.0 282.6 121.0M234.4 216.2C258.5 216.2 258.5 165.6 282.6 165.6M234.4 259.7C258.5 259.7 258.5 173.9 282.6 173.9M234.4 312.7C258.5 312.7 258.5 253.4 282.6 253.4M234.4 356.7C258.5 356.7 258.5 261.7 282.6 261.7M348.7 40.4C368.2 40.4 368.2 24.9 387.8 24.9M348.7 110.6C368.2 110.6 368.2 33.2 387.8 33.2M348.7 163.5C368.2 163.5 368.2 41.6 387.8 41.6M348.7 207.3C368.2 207.3 368.2 49.9 387.8 49.9M348.7 251.3C368.2 251.3 368.2 91.6 387.8 91.6M348.7 295.4C368.2 295.4 368.2 124.9 387.8 124.9M348.7 374.4C368.2 374.4 368.2 209.6 387.8 209.6M453.9 92.1C478.1 92.1 478.1 218.2 502.2 218.2M453.9 276.8C478.1 276.8 478.1 226.5 502.2 226.5M453.9 470.5C478.1 470.5 478.1 234.8 502.2 234.8M348.7 424.6C368.2 424.6 368.2 234.6 387.8 234.6M348.7 464.6C368.2 464.6 368.2 309.7 387.8 309.7M234.4 426.6C258.5 426.6 258.5 376.5 282.6 376.5M234.4 454.6C258.5 454.6 258.5 384.8 282.6 384.8" fill="none" stroke="#e8343a" stroke-width="1"/>
<circle cx="-51.40" cy="376.77" r="2.6" fill="#b4c0d6" stroke="#6a7488" stroke-width=".45"/>
<circle cx="-51.40" cy="385.11" r="2.6" fill="#b4c0d6" stroke="#6a7488" stroke-width=".45"/>
<circle cx="62.70" cy="112.67" r="2.6" fill="#b4c0d6" stroke="#6a7488" stroke-width=".45"/>
<circle cx="62.70" cy="297.47" r="2.6" fill="#b4c0d6" stroke="#6a7488" stroke-width=".45"/>
<circle cx="62.70" cy="341.37" r="2.6" fill="#d8f000" stroke="#56661a" stroke-width=".45"/>
<circle cx="62.70" cy="349.71" r="2.6" fill="#d8f000" stroke="#56661a" stroke-width=".45"/>
<circle cx="168.30" cy="77.47" r="2.6" fill="#d8f000" stroke="#56661a" stroke-width=".45"/>
<circle cx="168.30" cy="85.81" r="2.6" fill="#d8f000" stroke="#56661a" stroke-width=".45"/>
<circle cx="168.30" cy="130.57" r="2.6" fill="#d8f000" stroke="#56661a" stroke-width=".45"/>
<circle cx="168.30" cy="138.91" r="2.6" fill="#d8f000" stroke="#56661a" stroke-width=".45"/>
<circle cx="168.30" cy="182.97" r="2.6" fill="#b4c0d6" stroke="#6a7488" stroke-width=".45"/>
<circle cx="168.30" cy="261.77" r="2.6" fill="#d8f000" stroke="#56661a" stroke-width=".45"/>
<circle cx="168.30" cy="270.11" r="2.6" fill="#d8f000" stroke="#56661a" stroke-width=".45"/>
<circle cx="168.30" cy="314.77" r="2.6" fill="#d8f000" stroke="#56661a" stroke-width=".45"/>
<circle cx="168.30" cy="323.11" r="2.6" fill="#d8f000" stroke="#56661a" stroke-width=".45"/>
<circle cx="282.60" cy="42.47" r="2.6" fill="#d8f000" stroke="#56661a" stroke-width=".45"/>
<circle cx="282.60" cy="50.81" r="2.6" fill="#d8f000" stroke="#56661a" stroke-width=".45"/>
<circle cx="282.60" cy="112.67" r="2.6" fill="#d8f000" stroke="#56661a" stroke-width=".45"/>
<circle cx="282.60" cy="121.01" r="2.6" fill="#d8f000" stroke="#56661a" stroke-width=".45"/>
<circle cx="282.60" cy="165.57" r="2.6" fill="#d8f000" stroke="#56661a" stroke-width=".45"/>
<circle cx="282.60" cy="173.91" r="2.6" fill="#d8f000" stroke="#56661a" stroke-width=".45"/>
<circle cx="282.60" cy="253.37" r="2.6" fill="#d8f000" stroke="#56661a" stroke-width=".45"/>
<circle cx="282.60" cy="261.71" r="2.6" fill="#d8f000" stroke="#56661a" stroke-width=".45"/>
<circle cx="282.60" cy="376.47" r="2.6" fill="#d8f000" stroke="#56661a" stroke-width=".45"/>
<circle cx="282.60" cy="384.81" r="2.6" fill="#d8f000" stroke="#56661a" stroke-width=".45"/>
<circle cx="387.80" cy="24.87" r="2.6" fill="#d8f000" stroke="#56661a" stroke-width=".45"/>
<circle cx="387.80" cy="33.21" r="2.6" fill="#d8f000" stroke="#56661a" stroke-width=".45"/>
<circle cx="387.80" cy="41.55" r="2.6" fill="#d8f000" stroke="#56661a" stroke-width=".45"/>
<circle cx="387.80" cy="49.89" r="2.6" fill="#d8f000" stroke="#56661a" stroke-width=".45"/>
<circle cx="387.80" cy="58.23" r="2.6" fill="#b4c0d6" stroke="#6a7488" stroke-width=".45"/>
<circle cx="387.80" cy="66.57" r="2.6" fill="#b4c0d6" stroke="#6a7488" stroke-width=".45"/>
<circle cx="387.80" cy="74.91" r="2.6" fill="#b4c0d6" stroke="#6a7488" stroke-width=".45"/>
<circle cx="387.80" cy="83.25" r="2.6" fill="#b4c0d6" stroke="#6a7488" stroke-width=".45"/>
<circle cx="387.80" cy="91.59" r="2.6" fill="#d8f000" stroke="#56661a" stroke-width=".45"/>
<circle cx="387.80" cy="99.93" r="2.6" fill="#b4c0d6" stroke="#6a7488" stroke-width=".45"/>
<circle cx="387.80" cy="108.27" r="2.6" fill="#b4c0d6" stroke="#6a7488" stroke-width=".45"/>
<circle cx="387.80" cy="116.61" r="2.6" fill="#b4c0d6" stroke="#6a7488" stroke-width=".45"/>
<circle cx="387.80" cy="124.95" r="2.6" fill="#d8f000" stroke="#56661a" stroke-width=".45"/>
<circle cx="387.80" cy="133.29" r="2.6" fill="#b4c0d6" stroke="#6a7488" stroke-width=".45"/>
<circle cx="387.80" cy="141.63" r="2.6" fill="#b4c0d6" stroke="#6a7488" stroke-width=".45"/>
<circle cx="387.80" cy="149.97" r="2.6" fill="#b4c0d6" stroke="#6a7488" stroke-width=".45"/>
<circle cx="387.80" cy="158.31" r="2.6" fill="#b4c0d6" stroke="#6a7488" stroke-width=".45"/>
<circle cx="387.80" cy="166.65" r="2.6" fill="#b4c0d6" stroke="#6a7488" stroke-width=".45"/>
<circle cx="387.80" cy="209.57" r="2.6" fill="#d8f000" stroke="#56661a" stroke-width=".45"/>
<circle cx="387.80" cy="217.91" r="2.6" fill="#b4c0d6" stroke="#6a7488" stroke-width=".45"/>
<circle cx="387.80" cy="226.25" r="2.6" fill="#b4c0d6" stroke="#6a7488" stroke-width=".45"/>
<circle cx="387.80" cy="234.59" r="2.6" fill="#d8f000" stroke="#56661a" stroke-width=".45"/>
<circle cx="387.80" cy="242.93" r="2.6" fill="#b4c0d6" stroke="#6a7488" stroke-width=".45"/>
<circle cx="387.80" cy="251.27" r="2.6" fill="#b4c0d6" stroke="#6a7488" stroke-width=".45"/>
<circle cx="387.80" cy="259.61" r="2.6" fill="#b4c0d6" stroke="#6a7488" stroke-width=".45"/>
<circle cx="387.80" cy="267.95" r="2.6" fill="#b4c0d6" stroke="#6a7488" stroke-width=".45"/>
<circle cx="387.80" cy="276.29" r="2.6" fill="#b4c0d6" stroke="#6a7488" stroke-width=".45"/>
<circle cx="387.80" cy="284.63" r="2.6" fill="#b4c0d6" stroke="#6a7488" stroke-width=".45"/>
<circle cx="387.80" cy="292.97" r="2.6" fill="#b4c0d6" stroke="#6a7488" stroke-width=".45"/>
<circle cx="387.80" cy="301.31" r="2.6" fill="#b4c0d6" stroke="#6a7488" stroke-width=".45"/>
<circle cx="387.80" cy="309.65" r="2.6" fill="#d8f000" stroke="#56661a" stroke-width=".45"/>
<circle cx="387.80" cy="317.99" r="2.6" fill="#b4c0d6" stroke="#6a7488" stroke-width=".45"/>
<circle cx="387.80" cy="326.33" r="2.6" fill="#b4c0d6" stroke="#6a7488" stroke-width=".45"/>
<circle cx="387.80" cy="334.67" r="2.6" fill="#b4c0d6" stroke="#6a7488" stroke-width=".45"/>
<circle cx="387.80" cy="343.01" r="2.6" fill="#b4c0d6" stroke="#6a7488" stroke-width=".45"/>
<circle cx="387.80" cy="351.35" r="2.6" fill="#b4c0d6" stroke="#6a7488" stroke-width=".45"/>
<circle cx="387.80" cy="403.27" r="2.6" fill="#b4c0d6" stroke="#6a7488" stroke-width=".45"/>
<circle cx="387.80" cy="411.61" r="2.6" fill="#b4c0d6" stroke="#6a7488" stroke-width=".45"/>
<circle cx="387.80" cy="419.95" r="2.6" fill="#b4c0d6" stroke="#6a7488" stroke-width=".45"/>
<circle cx="387.80" cy="428.29" r="2.6" fill="#b4c0d6" stroke="#6a7488" stroke-width=".45"/>
<circle cx="387.80" cy="436.63" r="2.6" fill="#b4c0d6" stroke="#6a7488" stroke-width=".45"/>
<circle cx="387.80" cy="444.97" r="2.6" fill="#b4c0d6" stroke="#6a7488" stroke-width=".45"/>
<circle cx="387.80" cy="453.31" r="2.6" fill="#b4c0d6" stroke="#6a7488" stroke-width=".45"/>
<circle cx="387.80" cy="461.65" r="2.6" fill="#b4c0d6" stroke="#6a7488" stroke-width=".45"/>
<circle cx="387.80" cy="469.99" r="2.6" fill="#b4c0d6" stroke="#6a7488" stroke-width=".45"/>
<circle cx="387.80" cy="478.33" r="2.6" fill="#b4c0d6" stroke="#6a7488" stroke-width=".45"/>
<circle cx="387.80" cy="486.67" r="2.6" fill="#b4c0d6" stroke="#6a7488" stroke-width=".45"/>
<circle cx="387.80" cy="495.01" r="2.6" fill="#b4c0d6" stroke="#6a7488" stroke-width=".45"/>
<circle cx="387.80" cy="503.35" r="2.6" fill="#b4c0d6" stroke="#6a7488" stroke-width=".45"/>
<circle cx="387.80" cy="511.69" r="2.6" fill="#b4c0d6" stroke="#6a7488" stroke-width=".45"/>
<circle cx="387.80" cy="520.03" r="2.6" fill="#b4c0d6" stroke="#6a7488" stroke-width=".45"/>
<circle cx="387.80" cy="528.37" r="2.6" fill="#b4c0d6" stroke="#6a7488" stroke-width=".45"/>
<circle cx="387.80" cy="536.71" r="2.6" fill="#b4c0d6" stroke="#6a7488" stroke-width=".45"/>
<circle cx="387.80" cy="545.05" r="2.6" fill="#b4c0d6" stroke="#6a7488" stroke-width=".45"/>
<circle cx="502.20" cy="218.17" r="2.6" fill="#d8f000" stroke="#56661a" stroke-width=".45"/>
<circle cx="502.20" cy="226.51" r="2.6" fill="#d8f000" stroke="#56661a" stroke-width=".45"/>
<circle cx="502.20" cy="234.85" r="2.6" fill="#d8f000" stroke="#56661a" stroke-width=".45"/>
<circle cx="348.70" cy="295.35" r="2.6" fill="#d8f000" stroke="#56661a" stroke-width=".45"/>
<circle cx="234.40" cy="31.45" r="2.6" fill="#d8f000" stroke="#56661a" stroke-width=".45"/>
<circle cx="128.80" cy="291.20" r="2.6" fill="#d8f000" stroke="#56661a" stroke-width=".45"/>
<circle cx="234.40" cy="75.37" r="2.6" fill="#d8f000" stroke="#56661a" stroke-width=".45"/>
<circle cx="128.80" cy="106.40" r="2.6" fill="#d8f000" stroke="#56661a" stroke-width=".45"/>
<circle cx="128.80" cy="383.15" r="2.6" fill="#d8f000" stroke="#56661a" stroke-width=".45"/>
<circle cx="234.40" cy="312.67" r="2.6" fill="#d8f000" stroke="#56661a" stroke-width=".45"/>
<circle cx="453.90" cy="276.81" r="2.6" fill="#d8f000" stroke="#56661a" stroke-width=".45"/>
<circle cx="128.80" cy="180.45" r="2.6" fill="#d8f000" stroke="#56661a" stroke-width=".45"/>
<circle cx="348.70" cy="110.56" r="2.6" fill="#d8f000" stroke="#56661a" stroke-width=".45"/>
<circle cx="234.40" cy="176.69" r="2.6" fill="#d8f000" stroke="#56661a" stroke-width=".45"/>
<circle cx="128.80" cy="66.65" r="2.6" fill="#d8f000" stroke="#56661a" stroke-width=".45"/>
<circle cx="453.90" cy="92.11" r="2.6" fill="#d8f000" stroke="#56661a" stroke-width=".45"/>
<circle cx="348.70" cy="40.37" r="2.6" fill="#d8f000" stroke="#56661a" stroke-width=".45"/>
<circle cx="128.80" cy="339.26" r="2.6" fill="#d8f000" stroke="#56661a" stroke-width=".45"/>
<circle cx="234.40" cy="128.47" r="2.6" fill="#d8f000" stroke="#56661a" stroke-width=".45"/>
<circle cx="234.40" cy="356.65" r="2.6" fill="#d8f000" stroke="#56661a" stroke-width=".45"/>
<circle cx="453.90" cy="470.51" r="2.6" fill="#d8f000" stroke="#56661a" stroke-width=".45"/>
<circle cx="348.70" cy="374.37" r="2.6" fill="#d8f000" stroke="#56661a" stroke-width=".45"/>
<circle cx="234.40" cy="259.67" r="2.6" fill="#d8f000" stroke="#56661a" stroke-width=".45"/>
<circle cx="128.80" cy="146.05" r="2.6" fill="#d8f000" stroke="#56661a" stroke-width=".45"/>
<circle cx="234.40" cy="216.15" r="2.6" fill="#d8f000" stroke="#56661a" stroke-width=".45"/>
<circle cx="348.70" cy="163.47" r="2.6" fill="#d8f000" stroke="#56661a" stroke-width=".45"/>
<circle cx="348.70" cy="251.26" r="2.6" fill="#d8f000" stroke="#56661a" stroke-width=".45"/>
<circle cx="348.70" cy="207.35" r="2.6" fill="#d8f000" stroke="#56661a" stroke-width=".45"/>
<circle cx="14.70" cy="374.67" r="2.6" fill="#d8f000" stroke="#56661a" stroke-width=".45"/>
<circle cx="14.70" cy="330.65" r="2.6" fill="#d8f000" stroke="#56661a" stroke-width=".45"/>
<circle cx="568.30" cy="219.91" r="2.6" fill="#a9b9cf" stroke="#6a7488" stroke-width=".45"/>
<circle cx="128.80" cy="250.95" r="2.6" fill="#d8f000" stroke="#56661a" stroke-width=".45"/>
</svg>
<div class="a" style="left:.6px;top:373px;width:9.4px;height:14px;background:#5a5a5a;border:.6px solid #9a9a9a;border-radius:1px"></div>
<svg class="a" style="left:2px;top:377px;width:7px;height:7px" viewBox="0 0 7 7"><rect x=".8" y="1" width="2" height="5" rx=".6" fill="#eee"/><rect x="4" y="1" width="2" height="5" rx=".6" fill="#eee"/><rect x="2.6" y="2.4" width="1.6" height="1.4" fill="#ddd"/></svg>
</div>
<div class="a" style="left:651px;top:18.2px;width:149px;height:406px;background:#444;"></div>
<div class="a" style="left:652.2px;top:27.4px;width:0.8px;height:396.6px;background:#262626;"></div>
<div class="a" style="left:716px;top:19px;width:82px;height:7.6px;background:#5c5c5c;"></div>
<div class="t" style="left:718.4px;top:21.50px;font-size:4.4px;color:#cfcfcf;">View1</div>
<svg class="a" style="left:793.6px;top:21.8px;width:2.4px;height:2.4px" viewBox="0 0 3 3"><path d="M.2.6h2.6L1.5 2.4z" fill="#eee"/></svg>
<div class="a hdr" style="left:652.6px;top:27.6px;width:147.4px;height:7.6px"></div>
<div class="t" style="left:655.8px;top:29.10px;font-size:5.0px;color:#f0f0f0;font-weight:bold;">Navigator</div>
<div class="t" style="left:794.6px;top:30.16px;font-size:4.6px;color:#bbb;font-weight:bold;">x</div>
<div class="a" style="left:652.6px;top:35.6px;width:147.4px;height:41px;background:#444;border:.7px solid #262626"></div>
<svg class="a" style="left:652.6px;top:35.6px;width:147.4px;height:41px" viewBox="0 0 147.4 41"><rect x="65.10" y="4.95" width="4.60" height="1.18" fill="#3fbe7e"/><rect x="65.10" y="7.07" width="4.60" height="1.72" fill="#3fbe7e"/><rect x="65.10" y="8.22" width="4.60" height="0.12" fill="#2f9a64"/><rect x="65.10" y="9.70" width="4.60" height="1.18" fill="#3fbe7e"/><path d="M65.10 9.70h3.6l-2.4 1.3h-1.2z" fill="#d81820"/><rect x="65.10" y="11.78" width="4.60" height="1.18" fill="#3fbe7e"/><rect x="65.10" y="16.02" width="4.60" height="1.18" fill="#3fbe7e"/><rect x="65.10" y="18.15" width="4.60" height="1.72" fill="#3fbe7e"/><rect x="65.10" y="19.30" width="4.60" height="0.12" fill="#2f9a64"/><rect x="65.10" y="20.79" width="4.60" height="2.17" fill="#3fbe7e"/><rect x="65.10" y="21.94" width="4.60" height="0.12" fill="#2f9a64"/><rect x="65.10" y="22.44" width="4.60" height="0.12" fill="#2f9a64"/><rect x="65.10" y="23.93" width="4.60" height="1.18" fill="#3fbe7e"/><path d="M65.10 23.93h3.6l-2.4 1.3h-1.2z" fill="#d81820"/><rect x="65.10" y="26.01" width="4.60" height="2.17" fill="#3fbe7e"/><rect x="65.10" y="27.16" width="4.60" height="0.12" fill="#2f9a64"/><rect x="65.10" y="27.66" width="4.60" height="0.12" fill="#2f9a64"/><rect x="65.10" y="29.19" width="4.60" height="1.72" fill="#3fbe7e"/><rect x="65.10" y="30.34" width="4.60" height="0.12" fill="#2f9a64"/><rect x="65.10" y="31.29" width="4.60" height="2.17" fill="#3fbe7e"/><rect x="65.10" y="32.44" width="4.60" height="0.12" fill="#2f9a64"/><rect x="65.10" y="32.94" width="4.60" height="0.12" fill="#2f9a64"/><rect x="65.10" y="34.47" width="4.60" height="2.17" fill="#3fbe7e"/><rect x="65.10" y="35.62" width="4.60" height="0.12" fill="#2f9a64"/><rect x="65.10" y="36.12" width="4.60" height="0.12" fill="#2f9a64"/><rect x="65.10" y="36.87" width="4.60" height="1.18" fill="#3fbe7e"/><rect x="70.96" y="2.85" width="4.60" height="1.18" fill="#3fbe7e"/><path d="M70.96 2.85h3.6l-2.4 1.3h-1.2z" fill="#d81820"/><rect x="70.96" y="4.95" width="4.60" height="2.17" fill="#3fbe7e"/><rect x="70.96" y="6.10" width="4.60" height="0.12" fill="#2f9a64"/><rect x="70.96" y="6.60" width="4.60" height="0.12" fill="#2f9a64"/><rect x="70.96" y="8.14" width="4.60" height="2.17" fill="#3fbe7e"/><rect x="70.96" y="9.29" width="4.60" height="0.12" fill="#2f9a64"/><rect x="70.96" y="9.79" width="4.60" height="0.12" fill="#2f9a64"/><rect x="70.96" y="11.27" width="4.60" height="1.72" fill="#3fbe7e"/><rect x="70.96" y="12.42" width="4.60" height="0.12" fill="#2f9a64"/><rect x="70.96" y="13.89" width="4.60" height="1.18" fill="#3fbe7e"/><path d="M70.96 13.89h3.6l-2.4 1.3h-1.2z" fill="#d81820"/><rect x="70.96" y="16.03" width="4.60" height="2.17" fill="#3fbe7e"/><rect x="70.96" y="17.18" width="4.60" height="0.12" fill="#2f9a64"/><rect x="70.96" y="17.68" width="4.60" height="0.12" fill="#2f9a64"/><rect x="70.96" y="19.20" width="4.60" height="2.17" fill="#3fbe7e"/><rect x="70.96" y="20.35" width="4.60" height="0.12" fill="#2f9a64"/><rect x="70.96" y="20.85" width="4.60" height="0.12" fill="#2f9a64"/><rect x="70.96" y="22.34" width="4.60" height="1.18" fill="#3fbe7e"/><rect x="70.96" y="24.45" width="4.60" height="2.17" fill="#3fbe7e"/><rect x="70.96" y="25.60" width="4.60" height="0.12" fill="#2f9a64"/><rect x="70.96" y="26.10" width="4.60" height="0.12" fill="#2f9a64"/><rect x="70.96" y="27.63" width="4.60" height="2.17" fill="#3fbe7e"/><rect x="70.96" y="28.78" width="4.60" height="0.12" fill="#2f9a64"/><rect x="70.96" y="29.28" width="4.60" height="0.12" fill="#2f9a64"/><rect x="70.96" y="30.81" width="4.60" height="1.72" fill="#3fbe7e"/><rect x="70.96" y="31.96" width="4.60" height="0.12" fill="#2f9a64"/><rect x="70.96" y="33.39" width="4.60" height="2.17" fill="#3fbe7e"/><rect x="70.96" y="34.54" width="4.60" height="0.12" fill="#2f9a64"/><rect x="70.96" y="35.04" width="4.60" height="0.12" fill="#2f9a64"/><rect x="70.96" y="35.97" width="4.60" height="1.72" fill="#3fbe7e"/><rect x="70.96" y="37.12" width="4.60" height="0.12" fill="#2f9a64"/><rect x="77.30" y="2.85" width="4.60" height="2.17" fill="#3fbe7e"/><rect x="77.30" y="4.00" width="4.60" height="0.12" fill="#2f9a64"/><rect x="77.30" y="4.50" width="4.60" height="0.12" fill="#2f9a64"/><rect x="77.30" y="7.11" width="4.60" height="2.17" fill="#3fbe7e"/><rect x="77.30" y="8.26" width="4.60" height="0.12" fill="#2f9a64"/><rect x="77.30" y="8.76" width="4.60" height="0.12" fill="#2f9a64"/><rect x="77.30" y="10.24" width="4.60" height="2.17" fill="#3fbe7e"/><rect x="77.30" y="11.39" width="4.60" height="0.12" fill="#2f9a64"/><rect x="77.30" y="11.89" width="4.60" height="0.12" fill="#2f9a64"/><rect x="77.30" y="13.40" width="4.60" height="1.18" fill="#3fbe7e"/><rect x="77.30" y="15.51" width="4.60" height="2.17" fill="#3fbe7e"/><rect x="77.30" y="16.66" width="4.60" height="0.12" fill="#2f9a64"/><rect x="77.30" y="17.16" width="4.60" height="0.12" fill="#2f9a64"/><rect x="77.30" y="18.66" width="4.60" height="1.18" fill="#3fbe7e"/><path d="M77.30 18.66h3.6l-2.4 1.3h-1.2z" fill="#d81820"/><rect x="77.30" y="22.91" width="4.60" height="2.17" fill="#3fbe7e"/><rect x="77.30" y="24.06" width="4.60" height="0.12" fill="#2f9a64"/><rect x="77.30" y="24.56" width="4.60" height="0.12" fill="#2f9a64"/><rect x="77.30" y="26.07" width="4.60" height="2.17" fill="#3fbe7e"/><rect x="77.30" y="27.22" width="4.60" height="0.12" fill="#2f9a64"/><rect x="77.30" y="27.72" width="4.60" height="0.12" fill="#2f9a64"/><rect x="77.30" y="29.19" width="4.60" height="1.18" fill="#3fbe7e"/><rect x="83.14" y="1.77" width="4.90" height="10.49" fill="#4d86bd"/><rect x="83.14" y="12.85" width="4.90" height="10.49" fill="#4d86bd"/><rect x="83.14" y="24.47" width="4.90" height="10.49" fill="#4d86bd"/><rect x="89.49" y="13.36" width="5.00" height="4.40" fill="#d4dae2"/><rect x="90.19" y="14.26" width="3.60" height="2.60" fill="#3f7dab"/><rect x="58.80" y="19.95" width="4.60" height="2.17" fill="#3fbe7e"/><rect x="58.80" y="21.10" width="4.60" height="0.12" fill="#2f9a64"/><rect x="58.80" y="21.60" width="4.60" height="0.12" fill="#2f9a64"/><path d="M58.80 19.95h3.6l-2.4 1.3h-1.2z" fill="#d81820"/><rect x="58.80" y="29.01" width="4.60" height="1.18" fill="#3fbe7e"/><rect x="52.40" y="22.17" width="4.60" height="2.17" fill="#3fbe7e"/><rect x="52.40" y="23.32" width="4.60" height="0.12" fill="#2f9a64"/><rect x="52.40" y="23.82" width="4.60" height="0.12" fill="#2f9a64"/><rect x="61.6" y="1.7" width="33.3" height="23.1" rx=".6" fill="none" stroke="#c4202a" stroke-width=".6"/></svg>
<div class="a hdr" style="left:652.6px;top:78.8px;width:147.4px;height:7.8px"></div>
<div class="t" style="left:655.8px;top:80.72px;font-size:5.07px;color:#f0f0f0;font-weight:bold;">Material Parameter Editor</div>
<svg class="a" style="left:794px;top:82px;width:3px;height:3px" viewBox="0 0 3 3"><path d="M.2.6h2.6L1.5 2.4z" fill="#ddd"/></svg>
<div class="a" style="left:652.6px;top:87.4px;width:147.4px;height:336.6px;background:#444;border:.7px solid #262626"></div>
<div class="a" style="left:655px;top:89px;width:142.4px;height:7px;background:#5f5f5f;"></div>
<div class="a" style="left:0px;top:424.2px;width:800px;height:8.6px;background:#444;"></div>
<div class="a" style="left:0px;top:424.2px;width:800px;height:0.6px;background:#2c2c2c;"></div>
<div class="a" style="left:1px;top:425.4px;width:8.4px;height:6.6px;background:#4f79b5;border-radius:1px"></div>
<div class="a" style="left:2.6px;top:427.6px;width:5px;height:3px;border-radius:2px 2px 1px 1px;background:#e8eef8"></div>
<div class="t" style="left:11px;top:426.84px;font-size:4.25px;color:#ececec;-webkit-text-stroke:.2px #ececec">Rendering finished</div>
<div class="a" style="left:720.4px;top:425.2px;width:21px;height:6.8px;background:#5c5c5c;"></div>
<div class="t" style="left:722.6px;top:427.10px;font-size:4.4px;color:#e2e2e2;">105%</div>
<svg class="a" style="left:736.6px;top:427.6px;width:3px;height:3px" viewBox="0 0 3 3"><path d="M.2.6h2.6L1.5 2.4z" fill="#eee"/></svg>
<svg class="a" style="left:742px;top:424.6px;width:58px;height:8px" viewBox="0 0 58 8"><path d="M3.4 6.8V3.2l.8-1.2.8 1 .8-1.2.8 1.4.6-.6.4 1.6v2.6z" fill="#e8e8e8"/><circle cx="15.4" cy="3.2" r="1.7" fill="none" stroke="#e8e8e8" stroke-width=".8"/><path d="M14.2 4.6l-1.8 2" stroke="#e8e8e8" stroke-width=".9"/><circle cx="24.8" cy="4.2" r="1.6" fill="none" stroke="#30c0c0" stroke-width=".8"/><path d="M23.4 5.6l-1.4 1.6M25 1l1.4 1M27.4 2.2l.8-.8" stroke="#30c0c0" stroke-width=".7"/><rect x="32" y="1.6" width="5" height="5" fill="none" stroke="#e8e8e8" stroke-width=".6" stroke-dasharray="1.4 1"/><circle cx="34.5" cy="4.1" r="1.2" fill="#e8e8e8"/><rect x="41.6" y="1.6" width="5" height="5" fill="none" stroke="#30c0c0" stroke-width=".6" stroke-dasharray="1.4 1"/><circle cx="44.1" cy="4.1" r="1.4" fill="#30c0c0"/><rect x="51" y="1.6" width="5" height="5" fill="none" stroke="#30c0c0" stroke-width=".6" stroke-dasharray="1.4 1"/><rect x="52.6" y="3" width="2.2" height="3.4" fill="#30c0c0"/></svg>
<div class="a" style="left:0px;top:432.9px;width:800px;height:17.1px;background:#131313;"></div>
<div class="a" style="left:367.6px;top:433px;width:20.2px;height:17px;background:#2f2f2f;"></div>
<div class="a" style="left:451px;top:433px;width:16.8px;height:17px;background:#2c5029;"></div>
<div class="a" style="left:103.6px;top:448.7px;width:17.0px;height:1.3px;background:#a9a196;"></div>
<div class="a" style="left:144.6px;top:448.7px;width:17.0px;height:1.3px;background:#a9a196;"></div>
<div class="a" style="left:287px;top:448.7px;width:17px;height:1.3px;background:#a9a196;"></div>
<div class="a" style="left:308px;top:448.7px;width:17px;height:1.3px;background:#a9a196;"></div>
<div class="a" style="left:328.6px;top:448.7px;width:17.0px;height:1.3px;background:#a9a196;"></div>
<div class="a" style="left:367.6px;top:448.7px;width:19.19999999999999px;height:1.3px;background:#a9a196;"></div>
<div class="a" style="left:389.7px;top:448.7px;width:16.900000000000034px;height:1.3px;background:#a9a196;"></div>
<div class="a" style="left:409.6px;top:448.7px;width:17.099999999999966px;height:1.3px;background:#a9a196;"></div>
<div class="a" style="left:429.8px;top:448.7px;width:17.19999999999999px;height:1.3px;background:#a9a196;"></div>
<div class="a" style="left:451px;top:448.4px;width:16.8px;height:1.6px;background:#7fd06a;"></div>
<svg class="a" style="left:0;top:432.8px;width:800px;height:17.2px" viewBox="0 0 800 17.2"><g transform="translate(9.4 8.6) scale(1.16) translate(-9.4 -8)"><g fill="#fff"><rect x="6.6" y="5.2" width="2.6" height="2.6"/><rect x="9.6" y="5.2" width="2.6" height="2.6"/><rect x="6.6" y="8.2" width="2.6" height="2.6"/><rect x="9.6" y="8.2" width="2.6" height="2.6"/></g></g><g transform="translate(30 8.6) scale(1.16) translate(-30 -8)"><circle cx="31" cy="7.2" r="2" fill="none" stroke="#fff" stroke-width=".7"/><path d="M29.6 8.8l-2 2.2" stroke="#fff" stroke-width=".8"/></g><g transform="translate(49.2 8.6) scale(1.16) translate(-49.2 -8)"><rect x="46.6" y="5.6" width="5" height="4.8" rx=".8" fill="none" stroke="#fff" stroke-width=".6"/><path d="M45.4 6.4v3.2M52.8 6.4v3.2" stroke="#fff" stroke-width=".5"/></g><g transform="translate(71 8.6) scale(1.16) translate(-71 -8)"><path d="M67.8 6.2h6.4l-.4 5.4h-5.6z" fill="#fff"/><path d="M69.6 6.2a1.4 1.6 0 0 1 2.8 0" fill="none" stroke="#fff" stroke-width=".5"/><g fill="#121212"><rect x="69.4" y="7.6" width="1.3" height="1.3"/><rect x="71.1" y="7.6" width="1.3" height="1.3"/><rect x="69.4" y="9.3" width="1.3" height="1.3"/><rect x="71.1" y="9.3" width="1.3" height="1.3"/></g></g><g transform="translate(91.2 8.6) scale(1.16) translate(-91.2 -8)"><path d="M87.6 6.4l3.6-2.2 3.6 2.2v4.8h-7.2z" fill="#fff"/><path d="M87.8 6.8l3.4 2.2 3.4-2.2" fill="none" stroke="#121212" stroke-width=".5"/></g><g transform="translate(111.8 8.6) scale(1.16) translate(-111.8 -8)"><rect x="108" y="4.8" width="7.6" height="6.2" rx=".4" fill="#f3c94c"/><rect x="108" y="4.2" width="3.2" height="1.4" fill="#e0a820"/><rect x="109.4" y="7.8" width="4.8" height="3.2" fill="#5aa7e8"/></g><g transform="translate(132.8 8.6) scale(1.16) translate(-132.8 -8)"><circle cx="132.8" cy="8" r="3.9" fill="#78c043"/><path d="M131.4 6v2.6a1.4 1.4 0 0 0 2.8 0V6" fill="none" stroke="#fff" stroke-width=".9"/></g><g transform="translate(153.2 8.6) scale(1.16) translate(-153.2 -8)"><circle cx="153.2" cy="8" r="3.3" fill="none" stroke="#2f9fe8" stroke-width="1.4"/><circle cx="153.2" cy="8" r="1.1" fill="#2f9fe8"/></g><g transform="translate(173.4 8.6) scale(1.16) translate(-173.4 -8)"><rect x="170.6" y="4" width="5.6" height="8" rx=".4" fill="#f0f0f0"/><rect x="171.4" y="4.8" width="4" height="1.6" fill="#444"/><g fill="#444"><rect x="171.4" y="7.2" width="1" height="1"/><rect x="172.9" y="7.2" width="1" height="1"/><rect x="174.4" y="7.2" width="1" height="1"/><rect x="171.4" y="8.8" width="1" height="1"/><rect x="172.9" y="8.8" width="1" height="1"/><rect x="174.4" y="8.8" width="1" height="1"/><rect x="171.4" y="10.4" width="1" height="1"/><rect x="172.9" y="10.4" width="1" height="1"/><rect x="174.4" y="10.4" width="1" height="1"/></g></g><g transform="translate(193.8 8.6) scale(1.16) translate(-193.8 -8)"><circle cx="193.8" cy="8" r="3.9" fill="#1b3a5e"/><circle cx="195" cy="7" r="1.5" fill="none" stroke="#fff" stroke-width=".7"/><circle cx="192.2" cy="9.4" r="1" fill="#fff"/><path d="M192.6 9l2-1.6" stroke="#fff" stroke-width=".7"/></g><g transform="translate(213.4 8.6) scale(1.16) translate(-213.4 -8)"><rect x="210" y="4.2" width="6.6" height="5.4" fill="#e8eef8" stroke="#2f5fb8" stroke-width=".6"/><path d="M211 8.4l2-2.6 1.4 1.6 1.2-1" fill="none" stroke="#d04040" stroke-width=".6"/><rect x="213.4" y="9" width="3.6" height="2.8" fill="#3a6fd0"/></g><g transform="translate(234 8.6) scale(1.16) translate(-234 -8)"><path d="M231.2 10.6l4.2-6.4 1.8 1.2-4.2 6.4z" fill="#f0a020"/><path d="M230.6 6.4l7 3.6" stroke="#f8d880" stroke-width="1.2"/><path d="M236.6 5l-5.6 6" stroke="#7a4a10" stroke-width=".5"/></g><g transform="translate(254.2 8.6) scale(1.16) translate(-254.2 -8)"><rect x="250.6" y="4.4" width="7.2" height="7.2" fill="#2c0a1c" stroke="#e8408f" stroke-width=".6"/></g><g transform="translate(274.8 8.6) scale(1.16) translate(-274.8 -8)"><rect x="271.2" y="4.4" width="7.2" height="7.2" fill="#0a1c2c" stroke="#30a8f0" stroke-width=".6"/></g><g transform="translate(295.6 8.6) scale(1.16) translate(-295.6 -8)"><rect x="293.6" y="4.6" width="6" height="7" fill="#fff"/><rect x="291.6" y="5.6" width="4.6" height="5" fill="#2a5699"/></g><g transform="translate(316.4 8.6) scale(1.16) translate(-316.4 -8)"><rect x="314.4" y="4.6" width="6" height="7" fill="#fff"/><rect x="312.4" y="5.6" width="4.6" height="5" fill="#1f7244"/><path d="M317.6 6.4h2.2M317.6 8h2.2M317.6 9.6h2.2" stroke="#1f7244" stroke-width=".6"/></g><g transform="translate(336.8 8.6) scale(1.16) translate(-336.8 -8)"><rect x="333" y="4.2" width="7.6" height="7.6" rx=".6" fill="#f4f4f4"/></g><g transform="translate(357 8.6) scale(1.16) translate(-357 -8)"><ellipse cx="357" cy="7.4" rx="4" ry="2.8" fill="#e8e8e8"/><ellipse cx="357" cy="7.4" rx="4" ry="2.8" fill="none" stroke="#c03030" stroke-width=".7"/><path d="M355 9.6l2.4 2.2" stroke="#2f7fd0" stroke-width="1.2"/><path d="M354 6.6h6" stroke="#c03030" stroke-width=".6"/></g><g transform="translate(377.7 8.6) scale(1.16) translate(-377.7 -8)"><rect x="374" y="4" width="7.4" height="8" fill="#dff4f4"/><rect x="374" y="10.4" width="7.4" height="1.6" fill="#1aa0a0"/></g><g transform="translate(398 8.6) scale(1.16) translate(-398 -8)"><rect x="394.4" y="4.4" width="7.2" height="7.2" rx="1" fill="#fff"/><path d="M398 5.4l2.2 1.3v2.6l-2.2 1.3-2.2-1.3V6.7z" fill="#222"/><path d="M398 5.4v2.6l2.2 1.3M398 8l-2.2 1.3" stroke="#fff" stroke-width=".5"/></g><g transform="translate(418 8.6) scale(1.16) translate(-418 -8)"><rect x="414.6" y="7.6" width="7" height="3.6" fill="#bdbdbd"/><rect x="416" y="4.6" width="4.6" height="3.4" fill="#e8e8e8"/><rect x="415.4" y="10" width="3" height="1.6" fill="#777"/></g><g transform="translate(438.4 8.6) scale(1.16) translate(-438.4 -8)"><circle cx="438.4" cy="8" r="3.8" fill="#1ed760"/><path d="M436.2 6.8q2.2-.8 4.6.2M436.4 8.2q2-.6 4 .2M436.8 9.5q1.6-.4 3.2.2" fill="none" stroke="#121212" stroke-width=".6"/></g><g transform="translate(458.6 8.6) scale(1.16) translate(-458.6 -8)"><rect x="455" y="4.2" width="6.6" height="5" fill="#e8eef8" stroke="#2f5fb8" stroke-width=".6"/><rect x="456" y="5" width="2.4" height="3" fill="#3a6fd0"/><rect x="457.8" y="8.6" width="4.4" height="3.2" fill="#f0f0f0" stroke="#2f5fb8" stroke-width=".4"/><path d="M459 10.6h2" stroke="#d04040" stroke-width=".6"/></g><path d="M698.4 9l2-2 2 2" fill="none" stroke="#fff" stroke-width=".6"/><rect x="708.6" y="6.2" width="5.6" height="3.4" fill="#fff"/><rect x="714.2" y="7.2" width=".8" height="1.4" fill="#fff"/><path d="M719.4 10.4l4-4.4v4.4z" fill="none" stroke="#fff" stroke-width=".5"/><path d="M721.6 10.4l1.8-2v2z" fill="#fff"/><path d="M728.6 7.2h1.2l1.6-1.4v4.4l-1.6-1.4h-1.2z" fill="#fff"/><path d="M732.4 6.6q1 1.4 0 2.8M733.4 5.8q1.6 2.2 0 4.4" fill="none" stroke="#fff" stroke-width=".4"/><path d="M783.6 5h7v5h-4l-1.6 1.6V10h-1.4z" fill="#fff"/><circle cx="790.4" cy="10.4" r="2" fill="#121212" stroke="#fff" stroke-width=".4"/><g font-family="Liberation Sans, sans-serif" font-weight="bold"><text x="251.6" y="10.7" font-size="5.8" fill="#e8408f">Id</text><text x="271.8" y="10.7" font-size="5.8" fill="#30a8f0">Ps</text><text x="291.6" y="10.5" font-size="5" fill="#fff">W</text><text x="312.8" y="10.5" font-size="5" fill="#fff">X</text><text x="333.8" y="11.8" font-size="8.4" fill="#c8202a">A</text><text x="375.6" y="10.6" font-size="7.2" fill="#1aa0a0">3</text><text x="789.4" y="11.6" font-size="3" fill="#fff">3</text></g></svg>
<div class="t" style="left:738.6px;top:439.70px;font-size:4.4px;color:#fff;-webkit-text-stroke:.15px #fff">ENG</div>
<div class="t" style="left:759.6px;top:436.40px;font-size:4.4px;color:#fff;-webkit-text-stroke:.15px #fff">14:57</div>
<div class="t" style="left:754.4px;top:444.00px;font-size:4.4px;color:#fff;-webkit-text-stroke:.15px #fff">7-11-2017</div>
</div></body></html>
